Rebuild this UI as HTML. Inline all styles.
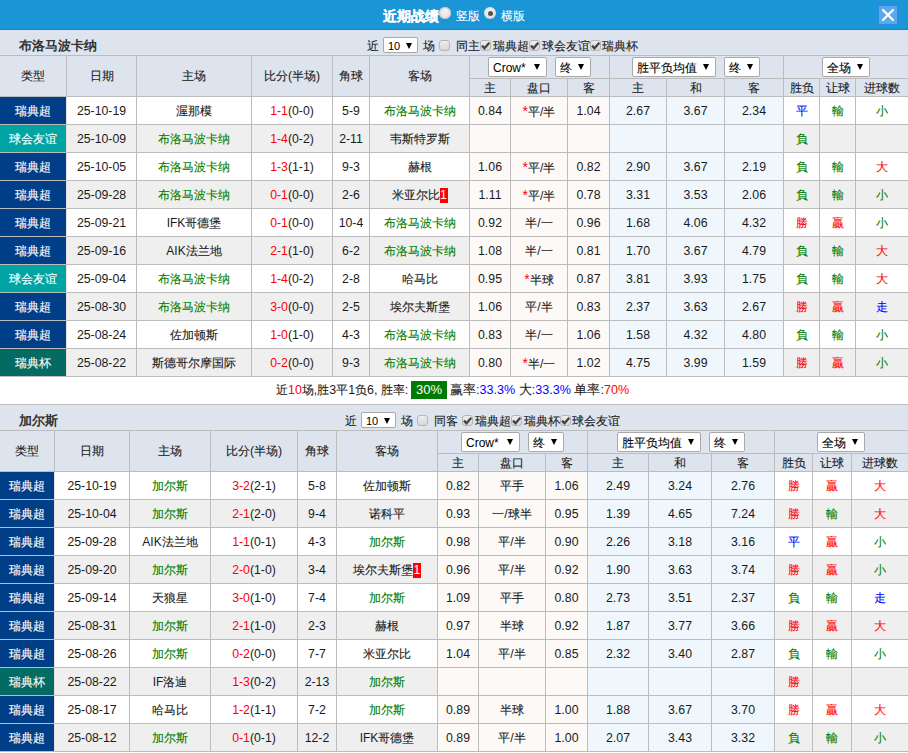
<!DOCTYPE html>
<html><head><meta charset="utf-8"><style>
html,body{margin:0;padding:0;}
body{width:908px;height:753px;overflow:hidden;position:relative;background:#fff;font-family:"Liberation Sans", sans-serif;}
.c{-webkit-text-stroke:0.1px currentColor;}
.b .c{-webkit-text-stroke:0;}
.cell .d{font-size:12.3px;}
.t .c{-webkit-text-stroke:0.25px #fff;}
</style></head><body>
<div style="position:absolute;left:0px;top:0px;width:908px;height:29px;background:#1a96d6;"></div><div style="position:absolute;left:0px;top:29px;width:908px;height:1px;background:#0b88cf;"></div><div class="t" style="position:absolute;left:383px;top:8px;height:17px;line-height:17px;color:#fff;font-size:14px;font-weight:bold;white-space:nowrap"><span class="c">近期战绩</span></div><div style="position:absolute;left:439px;top:7px;width:12px;height:12px;border-radius:50%;background:radial-gradient(circle at 50% 40%,#f4f4f4,#d8d8d8);box-shadow:inset 0 0 0 1px #c4c4c4"></div><div style="position:absolute;left:456px;top:9px;height:15px;line-height:15px;color:#fff;font-size:12px;font-weight:normal;white-space:nowrap;"><span class="c">竖版</span></div><div style="position:absolute;left:484px;top:7px;width:12px;height:12px;border-radius:50%;background:radial-gradient(circle at 50% 40%,#fafafa,#d0d0d0);"><div style="position:absolute;left:3.5px;top:3.5px;width:5px;height:5px;border-radius:50%;background:#555"></div></div><div style="position:absolute;left:501px;top:9px;height:15px;line-height:15px;color:#fff;font-size:12px;font-weight:normal;white-space:nowrap;"><span class="c">横版</span></div><div style="position:absolute;left:877px;top:4px;width:22px;height:22px;background:#2a8be4;"></div><div style="position:absolute;left:879px;top:6px;width:18px;height:18px;background:#5aa9ea;"></div><svg style="position:absolute;left:877px;top:4px" width="22" height="22"><path d="M6 6 L16 16 M16 6 L6 16" stroke="#fff" stroke-width="2.2" stroke-linecap="round"/></svg><div style="position:absolute;left:0px;top:30px;width:908px;height:25px;background:#dde4ed;"></div><div class="b" style="position:absolute;left:19px;top:36px;height:19px;line-height:19px;color:#333;font-size:13px;font-weight:bold;white-space:nowrap;"><span class="c">布洛马波卡纳</span></div><div style="position:absolute;left:367px;top:39px;height:15px;line-height:15px;color:#1a1a1a;font-size:12px;font-weight:normal;white-space:nowrap;"><span class="c">近</span></div><div style="position:absolute;left:383px;top:37px;width:33px;height:14px;border:1px solid #a9a9a9;border-radius:2px;background:#fff;box-sizing:content-box;font-size:11px;line-height:14px;color:#000;white-space:nowrap;"><span style="position:absolute;left:4px;top:1px"><span class="d">10</span></span><span style="position:absolute;right:5px;top:5px;width:0;height:0;border-left:3px solid transparent;border-right:3px solid transparent;border-top:6px solid #000"></span></div><div style="position:absolute;left:423px;top:39px;height:15px;line-height:15px;color:#1a1a1a;font-size:12px;font-weight:normal;white-space:nowrap;"><span class="c">场</span></div><div style="position:absolute;left:439px;top:40px;width:9px;height:9px;border:1px solid #b5b5b5;border-radius:3px;background:linear-gradient(#eeeeee,#d8d8d8);box-sizing:content-box"></div><div style="position:absolute;left:456px;top:39px;height:15px;line-height:15px;color:#1a1a1a;font-size:12px;font-weight:normal;white-space:nowrap;"><span class="c">同主</span></div><div style="position:absolute;left:480px;top:40px;width:9px;height:9px;border:1px solid #b5b5b5;border-radius:3px;background:linear-gradient(#eeeeee,#d8d8d8);box-sizing:content-box"><svg width="11" height="11" style="position:absolute;left:-1px;top:-1px"><path d="M2.0 5.6 L4.5 8.3 L9.3 2.8" stroke="#444" stroke-width="2.3" fill="none"/></svg></div><div style="position:absolute;left:493px;top:39px;height:15px;line-height:15px;color:#1a1a1a;font-size:12px;font-weight:normal;white-space:nowrap;"><span class="c">瑞典超</span></div><div style="position:absolute;left:529px;top:40px;width:9px;height:9px;border:1px solid #b5b5b5;border-radius:3px;background:linear-gradient(#eeeeee,#d8d8d8);box-sizing:content-box"><svg width="11" height="11" style="position:absolute;left:-1px;top:-1px"><path d="M2.0 5.6 L4.5 8.3 L9.3 2.8" stroke="#444" stroke-width="2.3" fill="none"/></svg></div><div style="position:absolute;left:542px;top:39px;height:15px;line-height:15px;color:#1a1a1a;font-size:12px;font-weight:normal;white-space:nowrap;"><span class="c">球会友谊</span></div><div style="position:absolute;left:590px;top:40px;width:9px;height:9px;border:1px solid #b5b5b5;border-radius:3px;background:linear-gradient(#eeeeee,#d8d8d8);box-sizing:content-box"><svg width="11" height="11" style="position:absolute;left:-1px;top:-1px"><path d="M2.0 5.6 L4.5 8.3 L9.3 2.8" stroke="#444" stroke-width="2.3" fill="none"/></svg></div><div style="position:absolute;left:602px;top:39px;height:15px;line-height:15px;color:#1a1a1a;font-size:12px;font-weight:normal;white-space:nowrap;"><span class="c">瑞典杯</span></div><div style="position:absolute;left:0px;top:56px;width:908px;height:40px;background:#dde4ed;"></div><div style="position:absolute;left:0px;top:55px;width:908px;height:1px;background:#bcbcbc;"></div><div style="position:absolute;left:0px;top:96px;width:908px;height:1px;background:#bcbcbc;"></div><div style="position:absolute;left:469px;top:78px;width:439px;height:1px;background:#bcbcbc;"></div><div style="position:absolute;left:66px;top:56px;width:1px;height:40px;background:#bcbcbc;"></div><div style="position:absolute;left:136px;top:56px;width:1px;height:40px;background:#bcbcbc;"></div><div style="position:absolute;left:251px;top:56px;width:1px;height:40px;background:#bcbcbc;"></div><div style="position:absolute;left:332px;top:56px;width:1px;height:40px;background:#bcbcbc;"></div><div style="position:absolute;left:369px;top:56px;width:1px;height:40px;background:#bcbcbc;"></div><div style="position:absolute;left:469px;top:56px;width:1px;height:40px;background:#bcbcbc;"></div><div style="position:absolute;left:609px;top:56px;width:1px;height:40px;background:#bcbcbc;"></div><div style="position:absolute;left:783px;top:56px;width:1px;height:40px;background:#bcbcbc;"></div><div style="position:absolute;left:510px;top:79px;width:1px;height:17px;background:#bcbcbc;"></div><div style="position:absolute;left:567px;top:79px;width:1px;height:17px;background:#bcbcbc;"></div><div style="position:absolute;left:666px;top:79px;width:1px;height:17px;background:#bcbcbc;"></div><div style="position:absolute;left:724px;top:79px;width:1px;height:17px;background:#bcbcbc;"></div><div style="position:absolute;left:819px;top:79px;width:1px;height:17px;background:#bcbcbc;"></div><div style="position:absolute;left:855px;top:79px;width:1px;height:17px;background:#bcbcbc;"></div><div class="cell" style="position:absolute;left:0px;top:56px;width:66px;height:40px;line-height:40px;text-align:center;color:#1a1a1a;font-size:12px;font-weight:normal;white-space:nowrap;"><span class="c">类型</span></div><div class="cell" style="position:absolute;left:67px;top:56px;width:69px;height:40px;line-height:40px;text-align:center;color:#1a1a1a;font-size:12px;font-weight:normal;white-space:nowrap;"><span class="c">日期</span></div><div class="cell" style="position:absolute;left:137px;top:56px;width:114px;height:40px;line-height:40px;text-align:center;color:#1a1a1a;font-size:12px;font-weight:normal;white-space:nowrap;"><span class="c">主场</span></div><div class="cell" style="position:absolute;left:252px;top:56px;width:80px;height:40px;line-height:40px;text-align:center;color:#1a1a1a;font-size:12px;font-weight:normal;white-space:nowrap;"><span class="c">比分</span><span class="d">(</span><span class="c">半场</span><span class="d">)</span></div><div class="cell" style="position:absolute;left:333px;top:56px;width:36px;height:40px;line-height:40px;text-align:center;color:#1a1a1a;font-size:12px;font-weight:normal;white-space:nowrap;"><span class="c">角球</span></div><div class="cell" style="position:absolute;left:370px;top:56px;width:99px;height:40px;line-height:40px;text-align:center;color:#1a1a1a;font-size:12px;font-weight:normal;white-space:nowrap;"><span class="c">客场</span></div><div class="cell" style="position:absolute;left:470px;top:80px;width:40px;height:17px;line-height:17px;text-align:center;color:#1a1a1a;font-size:12px;font-weight:normal;white-space:nowrap;"><span class="c">主</span></div><div class="cell" style="position:absolute;left:511px;top:80px;width:56px;height:17px;line-height:17px;text-align:center;color:#1a1a1a;font-size:12px;font-weight:normal;white-space:nowrap;"><span class="c">盘口</span></div><div class="cell" style="position:absolute;left:568px;top:80px;width:41px;height:17px;line-height:17px;text-align:center;color:#1a1a1a;font-size:12px;font-weight:normal;white-space:nowrap;"><span class="c">客</span></div><div class="cell" style="position:absolute;left:610px;top:80px;width:56px;height:17px;line-height:17px;text-align:center;color:#1a1a1a;font-size:12px;font-weight:normal;white-space:nowrap;"><span class="c">主</span></div><div class="cell" style="position:absolute;left:667px;top:80px;width:57px;height:17px;line-height:17px;text-align:center;color:#1a1a1a;font-size:12px;font-weight:normal;white-space:nowrap;"><span class="c">和</span></div><div class="cell" style="position:absolute;left:725px;top:80px;width:58px;height:17px;line-height:17px;text-align:center;color:#1a1a1a;font-size:12px;font-weight:normal;white-space:nowrap;"><span class="c">客</span></div><div class="cell" style="position:absolute;left:784px;top:80px;width:35px;height:17px;line-height:17px;text-align:center;color:#1a1a1a;font-size:12px;font-weight:normal;white-space:nowrap;"><span class="c">胜负</span></div><div class="cell" style="position:absolute;left:820px;top:80px;width:35px;height:17px;line-height:17px;text-align:center;color:#1a1a1a;font-size:12px;font-weight:normal;white-space:nowrap;"><span class="c">让球</span></div><div class="cell" style="position:absolute;left:856px;top:80px;width:52px;height:17px;line-height:17px;text-align:center;color:#1a1a1a;font-size:12px;font-weight:normal;white-space:nowrap;"><span class="c">进球数</span></div><div style="position:absolute;left:488px;top:57px;width:57px;height:18px;border:1px solid #a9a9a9;border-radius:2px;background:#fff;box-sizing:content-box;font-size:12px;line-height:18px;color:#000;white-space:nowrap;"><span style="position:absolute;left:4px;top:1px">Crow*</span><span style="position:absolute;right:6px;top:6px;width:0;height:0;border-left:3px solid transparent;border-right:3px solid transparent;border-top:6px solid #000"></span></div><div style="position:absolute;left:555px;top:57px;width:34px;height:18px;border:1px solid #a9a9a9;border-radius:2px;background:#fff;box-sizing:content-box;font-size:12px;line-height:18px;color:#000;white-space:nowrap;"><span style="position:absolute;left:4px;top:1px"><span class="c">终</span></span><span style="position:absolute;right:6px;top:6px;width:0;height:0;border-left:3px solid transparent;border-right:3px solid transparent;border-top:6px solid #000"></span></div><div style="position:absolute;left:632px;top:57px;width:82px;height:18px;border:1px solid #a9a9a9;border-radius:2px;background:#fff;box-sizing:content-box;font-size:12px;line-height:18px;color:#000;white-space:nowrap;"><span style="position:absolute;left:4px;top:1px"><span class="c">胜平负均值</span></span><span style="position:absolute;right:6px;top:6px;width:0;height:0;border-left:3px solid transparent;border-right:3px solid transparent;border-top:6px solid #000"></span></div><div style="position:absolute;left:724px;top:57px;width:34px;height:18px;border:1px solid #a9a9a9;border-radius:2px;background:#fff;box-sizing:content-box;font-size:12px;line-height:18px;color:#000;white-space:nowrap;"><span style="position:absolute;left:4px;top:1px"><span class="c">终</span></span><span style="position:absolute;right:6px;top:6px;width:0;height:0;border-left:3px solid transparent;border-right:3px solid transparent;border-top:6px solid #000"></span></div><div style="position:absolute;left:822px;top:57px;width:46px;height:18px;border:1px solid #a9a9a9;border-radius:2px;background:#fff;box-sizing:content-box;font-size:12px;line-height:18px;color:#000;white-space:nowrap;"><span style="position:absolute;left:4px;top:1px"><span class="c">全场</span></span><span style="position:absolute;right:6px;top:6px;width:0;height:0;border-left:3px solid transparent;border-right:3px solid transparent;border-top:6px solid #000"></span></div><div style="position:absolute;left:0px;top:97px;width:908px;height:27px;background:#ffffff;"></div><div style="position:absolute;left:0px;top:97px;width:66px;height:27px;background:#013e88;"></div><div style="position:absolute;left:470px;top:97px;width:139px;height:27px;background:#fdf9f7;"></div><div style="position:absolute;left:610px;top:97px;width:173px;height:27px;background:#eff7fc;"></div><div class="cell" style="position:absolute;left:0px;top:98px;width:66px;height:27px;line-height:27px;text-align:center;color:#fff;font-size:12px;font-weight:normal;white-space:nowrap;"><span class="c">瑞典超</span></div><div class="cell" style="position:absolute;left:67px;top:98px;width:69px;height:27px;line-height:27px;text-align:center;color:#1a1a1a;font-size:12px;font-weight:normal;white-space:nowrap;"><span class="d">25-10-19</span></div><div class="cell" style="position:absolute;left:137px;top:98px;width:114px;height:27px;line-height:27px;text-align:center;color:#1a1a1a;font-size:12px;font-weight:normal;white-space:nowrap;"><span class="c">渥那模</span></div><div class="cell" style="position:absolute;left:252px;top:98px;width:80px;height:27px;line-height:27px;text-align:center;color:#1a1a1a;font-size:12px;font-weight:normal;white-space:nowrap;"><span style="color:#ff0000"><span class="d">1-1</span></span><span class="d">(0-0)</span></div><div class="cell" style="position:absolute;left:333px;top:98px;width:36px;height:27px;line-height:27px;text-align:center;color:#1a1a1a;font-size:12px;font-weight:normal;white-space:nowrap;"><span class="d">5-9</span></div><div class="cell" style="position:absolute;left:370px;top:98px;width:99px;height:27px;line-height:27px;text-align:center;color:#008000;font-size:12px;font-weight:normal;white-space:nowrap;"><span class="c">布洛马波卡纳</span></div><div class="cell" style="position:absolute;left:470px;top:98px;width:40px;height:27px;line-height:27px;text-align:center;color:#1a1a1a;font-size:12px;font-weight:normal;white-space:nowrap;"><span class="d">0.84</span></div><div class="cell" style="position:absolute;left:511px;top:98px;width:56px;height:27px;line-height:27px;text-align:center;color:#1a1a1a;font-size:12px;font-weight:normal;white-space:nowrap;"><span style="color:#ff0000;font-size:14px">*</span><span class="c">平</span><span class="d">/</span><span class="c">半</span></div><div class="cell" style="position:absolute;left:568px;top:98px;width:41px;height:27px;line-height:27px;text-align:center;color:#1a1a1a;font-size:12px;font-weight:normal;white-space:nowrap;"><span class="d">1.04</span></div><div class="cell" style="position:absolute;left:610px;top:98px;width:56px;height:27px;line-height:27px;text-align:center;color:#1a1a1a;font-size:12px;font-weight:normal;white-space:nowrap;"><span class="d">2.67</span></div><div class="cell" style="position:absolute;left:667px;top:98px;width:57px;height:27px;line-height:27px;text-align:center;color:#1a1a1a;font-size:12px;font-weight:normal;white-space:nowrap;"><span class="d">3.67</span></div><div class="cell" style="position:absolute;left:725px;top:98px;width:58px;height:27px;line-height:27px;text-align:center;color:#1a1a1a;font-size:12px;font-weight:normal;white-space:nowrap;"><span class="d">2.34</span></div><div class="cell" style="position:absolute;left:784px;top:98px;width:35px;height:27px;line-height:27px;text-align:center;color:#0000ff;font-size:12px;font-weight:normal;white-space:nowrap;"><span class="c">平</span></div><div class="cell" style="position:absolute;left:820px;top:98px;width:35px;height:27px;line-height:27px;text-align:center;color:#008000;font-size:12px;font-weight:normal;white-space:nowrap;"><span class="c">輸</span></div><div class="cell" style="position:absolute;left:856px;top:98px;width:52px;height:27px;line-height:27px;text-align:center;color:#008000;font-size:12px;font-weight:normal;white-space:nowrap;"><span class="c">小</span></div><div style="position:absolute;left:0px;top:124px;width:908px;height:1px;background:#bcbcbc;"></div><div style="position:absolute;left:66px;top:97px;width:1px;height:27px;background:#e8e2e2;"></div><div style="position:absolute;left:136px;top:97px;width:1px;height:27px;background:#bcbcbc;"></div><div style="position:absolute;left:251px;top:97px;width:1px;height:27px;background:#bcbcbc;"></div><div style="position:absolute;left:332px;top:97px;width:1px;height:27px;background:#bcbcbc;"></div><div style="position:absolute;left:369px;top:97px;width:1px;height:27px;background:#bcbcbc;"></div><div style="position:absolute;left:469px;top:97px;width:1px;height:27px;background:#bcbcbc;"></div><div style="position:absolute;left:510px;top:97px;width:1px;height:27px;background:#bcbcbc;"></div><div style="position:absolute;left:567px;top:97px;width:1px;height:27px;background:#bcbcbc;"></div><div style="position:absolute;left:609px;top:97px;width:1px;height:27px;background:#bcbcbc;"></div><div style="position:absolute;left:666px;top:97px;width:1px;height:27px;background:#bcbcbc;"></div><div style="position:absolute;left:724px;top:97px;width:1px;height:27px;background:#bcbcbc;"></div><div style="position:absolute;left:783px;top:97px;width:1px;height:27px;background:#bcbcbc;"></div><div style="position:absolute;left:819px;top:97px;width:1px;height:27px;background:#bcbcbc;"></div><div style="position:absolute;left:855px;top:97px;width:1px;height:27px;background:#bcbcbc;"></div><div style="position:absolute;left:0px;top:125px;width:908px;height:27px;background:#efefef;"></div><div style="position:absolute;left:0px;top:125px;width:66px;height:27px;background:#00a5a3;"></div><div style="position:absolute;left:470px;top:125px;width:139px;height:27px;background:#fdf9f7;"></div><div style="position:absolute;left:610px;top:125px;width:173px;height:27px;background:#eff7fc;"></div><div class="cell" style="position:absolute;left:0px;top:126px;width:66px;height:27px;line-height:27px;text-align:center;color:#fff;font-size:12px;font-weight:normal;white-space:nowrap;"><span class="c">球会友谊</span></div><div class="cell" style="position:absolute;left:67px;top:126px;width:69px;height:27px;line-height:27px;text-align:center;color:#1a1a1a;font-size:12px;font-weight:normal;white-space:nowrap;"><span class="d">25-10-09</span></div><div class="cell" style="position:absolute;left:137px;top:126px;width:114px;height:27px;line-height:27px;text-align:center;color:#008000;font-size:12px;font-weight:normal;white-space:nowrap;"><span class="c">布洛马波卡纳</span></div><div class="cell" style="position:absolute;left:252px;top:126px;width:80px;height:27px;line-height:27px;text-align:center;color:#1a1a1a;font-size:12px;font-weight:normal;white-space:nowrap;"><span style="color:#ff0000"><span class="d">1-4</span></span><span class="d">(0-2)</span></div><div class="cell" style="position:absolute;left:333px;top:126px;width:36px;height:27px;line-height:27px;text-align:center;color:#1a1a1a;font-size:12px;font-weight:normal;white-space:nowrap;"><span class="d">2-11</span></div><div class="cell" style="position:absolute;left:370px;top:126px;width:99px;height:27px;line-height:27px;text-align:center;color:#1a1a1a;font-size:12px;font-weight:normal;white-space:nowrap;"><span class="c">韦斯特罗斯</span></div><div class="cell" style="position:absolute;left:784px;top:126px;width:35px;height:27px;line-height:27px;text-align:center;color:#008000;font-size:12px;font-weight:normal;white-space:nowrap;"><span class="c">負</span></div><div style="position:absolute;left:0px;top:152px;width:908px;height:1px;background:#bcbcbc;"></div><div style="position:absolute;left:66px;top:125px;width:1px;height:27px;background:#e8e2e2;"></div><div style="position:absolute;left:136px;top:125px;width:1px;height:27px;background:#bcbcbc;"></div><div style="position:absolute;left:251px;top:125px;width:1px;height:27px;background:#bcbcbc;"></div><div style="position:absolute;left:332px;top:125px;width:1px;height:27px;background:#bcbcbc;"></div><div style="position:absolute;left:369px;top:125px;width:1px;height:27px;background:#bcbcbc;"></div><div style="position:absolute;left:469px;top:125px;width:1px;height:27px;background:#bcbcbc;"></div><div style="position:absolute;left:510px;top:125px;width:1px;height:27px;background:#bcbcbc;"></div><div style="position:absolute;left:567px;top:125px;width:1px;height:27px;background:#bcbcbc;"></div><div style="position:absolute;left:609px;top:125px;width:1px;height:27px;background:#bcbcbc;"></div><div style="position:absolute;left:666px;top:125px;width:1px;height:27px;background:#bcbcbc;"></div><div style="position:absolute;left:724px;top:125px;width:1px;height:27px;background:#bcbcbc;"></div><div style="position:absolute;left:783px;top:125px;width:1px;height:27px;background:#bcbcbc;"></div><div style="position:absolute;left:819px;top:125px;width:1px;height:27px;background:#bcbcbc;"></div><div style="position:absolute;left:855px;top:125px;width:1px;height:27px;background:#bcbcbc;"></div><div style="position:absolute;left:0px;top:153px;width:908px;height:27px;background:#ffffff;"></div><div style="position:absolute;left:0px;top:153px;width:66px;height:27px;background:#013e88;"></div><div style="position:absolute;left:470px;top:153px;width:139px;height:27px;background:#fdf9f7;"></div><div style="position:absolute;left:610px;top:153px;width:173px;height:27px;background:#eff7fc;"></div><div class="cell" style="position:absolute;left:0px;top:154px;width:66px;height:27px;line-height:27px;text-align:center;color:#fff;font-size:12px;font-weight:normal;white-space:nowrap;"><span class="c">瑞典超</span></div><div class="cell" style="position:absolute;left:67px;top:154px;width:69px;height:27px;line-height:27px;text-align:center;color:#1a1a1a;font-size:12px;font-weight:normal;white-space:nowrap;"><span class="d">25-10-05</span></div><div class="cell" style="position:absolute;left:137px;top:154px;width:114px;height:27px;line-height:27px;text-align:center;color:#008000;font-size:12px;font-weight:normal;white-space:nowrap;"><span class="c">布洛马波卡纳</span></div><div class="cell" style="position:absolute;left:252px;top:154px;width:80px;height:27px;line-height:27px;text-align:center;color:#1a1a1a;font-size:12px;font-weight:normal;white-space:nowrap;"><span style="color:#ff0000"><span class="d">1-3</span></span><span class="d">(1-1)</span></div><div class="cell" style="position:absolute;left:333px;top:154px;width:36px;height:27px;line-height:27px;text-align:center;color:#1a1a1a;font-size:12px;font-weight:normal;white-space:nowrap;"><span class="d">9-3</span></div><div class="cell" style="position:absolute;left:370px;top:154px;width:99px;height:27px;line-height:27px;text-align:center;color:#1a1a1a;font-size:12px;font-weight:normal;white-space:nowrap;"><span class="c">赫根</span></div><div class="cell" style="position:absolute;left:470px;top:154px;width:40px;height:27px;line-height:27px;text-align:center;color:#1a1a1a;font-size:12px;font-weight:normal;white-space:nowrap;"><span class="d">1.06</span></div><div class="cell" style="position:absolute;left:511px;top:154px;width:56px;height:27px;line-height:27px;text-align:center;color:#1a1a1a;font-size:12px;font-weight:normal;white-space:nowrap;"><span style="color:#ff0000;font-size:14px">*</span><span class="c">平</span><span class="d">/</span><span class="c">半</span></div><div class="cell" style="position:absolute;left:568px;top:154px;width:41px;height:27px;line-height:27px;text-align:center;color:#1a1a1a;font-size:12px;font-weight:normal;white-space:nowrap;"><span class="d">0.82</span></div><div class="cell" style="position:absolute;left:610px;top:154px;width:56px;height:27px;line-height:27px;text-align:center;color:#1a1a1a;font-size:12px;font-weight:normal;white-space:nowrap;"><span class="d">2.90</span></div><div class="cell" style="position:absolute;left:667px;top:154px;width:57px;height:27px;line-height:27px;text-align:center;color:#1a1a1a;font-size:12px;font-weight:normal;white-space:nowrap;"><span class="d">3.67</span></div><div class="cell" style="position:absolute;left:725px;top:154px;width:58px;height:27px;line-height:27px;text-align:center;color:#1a1a1a;font-size:12px;font-weight:normal;white-space:nowrap;"><span class="d">2.19</span></div><div class="cell" style="position:absolute;left:784px;top:154px;width:35px;height:27px;line-height:27px;text-align:center;color:#008000;font-size:12px;font-weight:normal;white-space:nowrap;"><span class="c">負</span></div><div class="cell" style="position:absolute;left:820px;top:154px;width:35px;height:27px;line-height:27px;text-align:center;color:#008000;font-size:12px;font-weight:normal;white-space:nowrap;"><span class="c">輸</span></div><div class="cell" style="position:absolute;left:856px;top:154px;width:52px;height:27px;line-height:27px;text-align:center;color:#ff0000;font-size:12px;font-weight:normal;white-space:nowrap;"><span class="c">大</span></div><div style="position:absolute;left:0px;top:180px;width:908px;height:1px;background:#bcbcbc;"></div><div style="position:absolute;left:66px;top:153px;width:1px;height:27px;background:#e8e2e2;"></div><div style="position:absolute;left:136px;top:153px;width:1px;height:27px;background:#bcbcbc;"></div><div style="position:absolute;left:251px;top:153px;width:1px;height:27px;background:#bcbcbc;"></div><div style="position:absolute;left:332px;top:153px;width:1px;height:27px;background:#bcbcbc;"></div><div style="position:absolute;left:369px;top:153px;width:1px;height:27px;background:#bcbcbc;"></div><div style="position:absolute;left:469px;top:153px;width:1px;height:27px;background:#bcbcbc;"></div><div style="position:absolute;left:510px;top:153px;width:1px;height:27px;background:#bcbcbc;"></div><div style="position:absolute;left:567px;top:153px;width:1px;height:27px;background:#bcbcbc;"></div><div style="position:absolute;left:609px;top:153px;width:1px;height:27px;background:#bcbcbc;"></div><div style="position:absolute;left:666px;top:153px;width:1px;height:27px;background:#bcbcbc;"></div><div style="position:absolute;left:724px;top:153px;width:1px;height:27px;background:#bcbcbc;"></div><div style="position:absolute;left:783px;top:153px;width:1px;height:27px;background:#bcbcbc;"></div><div style="position:absolute;left:819px;top:153px;width:1px;height:27px;background:#bcbcbc;"></div><div style="position:absolute;left:855px;top:153px;width:1px;height:27px;background:#bcbcbc;"></div><div style="position:absolute;left:0px;top:181px;width:908px;height:27px;background:#efefef;"></div><div style="position:absolute;left:0px;top:181px;width:66px;height:27px;background:#013e88;"></div><div style="position:absolute;left:470px;top:181px;width:139px;height:27px;background:#fdf9f7;"></div><div style="position:absolute;left:610px;top:181px;width:173px;height:27px;background:#eff7fc;"></div><div class="cell" style="position:absolute;left:0px;top:182px;width:66px;height:27px;line-height:27px;text-align:center;color:#fff;font-size:12px;font-weight:normal;white-space:nowrap;"><span class="c">瑞典超</span></div><div class="cell" style="position:absolute;left:67px;top:182px;width:69px;height:27px;line-height:27px;text-align:center;color:#1a1a1a;font-size:12px;font-weight:normal;white-space:nowrap;"><span class="d">25-09-28</span></div><div class="cell" style="position:absolute;left:137px;top:182px;width:114px;height:27px;line-height:27px;text-align:center;color:#008000;font-size:12px;font-weight:normal;white-space:nowrap;"><span class="c">布洛马波卡纳</span></div><div class="cell" style="position:absolute;left:252px;top:182px;width:80px;height:27px;line-height:27px;text-align:center;color:#1a1a1a;font-size:12px;font-weight:normal;white-space:nowrap;"><span style="color:#ff0000"><span class="d">0-1</span></span><span class="d">(0-0)</span></div><div class="cell" style="position:absolute;left:333px;top:182px;width:36px;height:27px;line-height:27px;text-align:center;color:#1a1a1a;font-size:12px;font-weight:normal;white-space:nowrap;"><span class="d">2-6</span></div><div class="cell" style="position:absolute;left:370px;top:182px;width:99px;height:27px;line-height:27px;text-align:center;color:#1a1a1a;font-size:12px;font-weight:normal;white-space:nowrap;"><span class="c">米亚尔比</span><span style="display:inline-block;background:#f00;color:#fff;font-size:12px;line-height:15px;width:8px;text-align:center;vertical-align:0px"><span class="d">1</span></span></div><div class="cell" style="position:absolute;left:470px;top:182px;width:40px;height:27px;line-height:27px;text-align:center;color:#1a1a1a;font-size:12px;font-weight:normal;white-space:nowrap;"><span class="d">1.11</span></div><div class="cell" style="position:absolute;left:511px;top:182px;width:56px;height:27px;line-height:27px;text-align:center;color:#1a1a1a;font-size:12px;font-weight:normal;white-space:nowrap;"><span style="color:#ff0000;font-size:14px">*</span><span class="c">平</span><span class="d">/</span><span class="c">半</span></div><div class="cell" style="position:absolute;left:568px;top:182px;width:41px;height:27px;line-height:27px;text-align:center;color:#1a1a1a;font-size:12px;font-weight:normal;white-space:nowrap;"><span class="d">0.78</span></div><div class="cell" style="position:absolute;left:610px;top:182px;width:56px;height:27px;line-height:27px;text-align:center;color:#1a1a1a;font-size:12px;font-weight:normal;white-space:nowrap;"><span class="d">3.31</span></div><div class="cell" style="position:absolute;left:667px;top:182px;width:57px;height:27px;line-height:27px;text-align:center;color:#1a1a1a;font-size:12px;font-weight:normal;white-space:nowrap;"><span class="d">3.53</span></div><div class="cell" style="position:absolute;left:725px;top:182px;width:58px;height:27px;line-height:27px;text-align:center;color:#1a1a1a;font-size:12px;font-weight:normal;white-space:nowrap;"><span class="d">2.06</span></div><div class="cell" style="position:absolute;left:784px;top:182px;width:35px;height:27px;line-height:27px;text-align:center;color:#008000;font-size:12px;font-weight:normal;white-space:nowrap;"><span class="c">負</span></div><div class="cell" style="position:absolute;left:820px;top:182px;width:35px;height:27px;line-height:27px;text-align:center;color:#008000;font-size:12px;font-weight:normal;white-space:nowrap;"><span class="c">輸</span></div><div class="cell" style="position:absolute;left:856px;top:182px;width:52px;height:27px;line-height:27px;text-align:center;color:#008000;font-size:12px;font-weight:normal;white-space:nowrap;"><span class="c">小</span></div><div style="position:absolute;left:0px;top:208px;width:908px;height:1px;background:#bcbcbc;"></div><div style="position:absolute;left:66px;top:181px;width:1px;height:27px;background:#e8e2e2;"></div><div style="position:absolute;left:136px;top:181px;width:1px;height:27px;background:#bcbcbc;"></div><div style="position:absolute;left:251px;top:181px;width:1px;height:27px;background:#bcbcbc;"></div><div style="position:absolute;left:332px;top:181px;width:1px;height:27px;background:#bcbcbc;"></div><div style="position:absolute;left:369px;top:181px;width:1px;height:27px;background:#bcbcbc;"></div><div style="position:absolute;left:469px;top:181px;width:1px;height:27px;background:#bcbcbc;"></div><div style="position:absolute;left:510px;top:181px;width:1px;height:27px;background:#bcbcbc;"></div><div style="position:absolute;left:567px;top:181px;width:1px;height:27px;background:#bcbcbc;"></div><div style="position:absolute;left:609px;top:181px;width:1px;height:27px;background:#bcbcbc;"></div><div style="position:absolute;left:666px;top:181px;width:1px;height:27px;background:#bcbcbc;"></div><div style="position:absolute;left:724px;top:181px;width:1px;height:27px;background:#bcbcbc;"></div><div style="position:absolute;left:783px;top:181px;width:1px;height:27px;background:#bcbcbc;"></div><div style="position:absolute;left:819px;top:181px;width:1px;height:27px;background:#bcbcbc;"></div><div style="position:absolute;left:855px;top:181px;width:1px;height:27px;background:#bcbcbc;"></div><div style="position:absolute;left:0px;top:209px;width:908px;height:27px;background:#ffffff;"></div><div style="position:absolute;left:0px;top:209px;width:66px;height:27px;background:#013e88;"></div><div style="position:absolute;left:470px;top:209px;width:139px;height:27px;background:#fdf9f7;"></div><div style="position:absolute;left:610px;top:209px;width:173px;height:27px;background:#eff7fc;"></div><div class="cell" style="position:absolute;left:0px;top:210px;width:66px;height:27px;line-height:27px;text-align:center;color:#fff;font-size:12px;font-weight:normal;white-space:nowrap;"><span class="c">瑞典超</span></div><div class="cell" style="position:absolute;left:67px;top:210px;width:69px;height:27px;line-height:27px;text-align:center;color:#1a1a1a;font-size:12px;font-weight:normal;white-space:nowrap;"><span class="d">25-09-21</span></div><div class="cell" style="position:absolute;left:137px;top:210px;width:114px;height:27px;line-height:27px;text-align:center;color:#1a1a1a;font-size:12px;font-weight:normal;white-space:nowrap;">IFK<span class="c">哥德堡</span></div><div class="cell" style="position:absolute;left:252px;top:210px;width:80px;height:27px;line-height:27px;text-align:center;color:#1a1a1a;font-size:12px;font-weight:normal;white-space:nowrap;"><span style="color:#ff0000"><span class="d">0-1</span></span><span class="d">(0-0)</span></div><div class="cell" style="position:absolute;left:333px;top:210px;width:36px;height:27px;line-height:27px;text-align:center;color:#1a1a1a;font-size:12px;font-weight:normal;white-space:nowrap;"><span class="d">10-4</span></div><div class="cell" style="position:absolute;left:370px;top:210px;width:99px;height:27px;line-height:27px;text-align:center;color:#008000;font-size:12px;font-weight:normal;white-space:nowrap;"><span class="c">布洛马波卡纳</span></div><div class="cell" style="position:absolute;left:470px;top:210px;width:40px;height:27px;line-height:27px;text-align:center;color:#1a1a1a;font-size:12px;font-weight:normal;white-space:nowrap;"><span class="d">0.92</span></div><div class="cell" style="position:absolute;left:511px;top:210px;width:56px;height:27px;line-height:27px;text-align:center;color:#1a1a1a;font-size:12px;font-weight:normal;white-space:nowrap;"><span class="c">半</span><span class="d">/</span><span class="c">一</span></div><div class="cell" style="position:absolute;left:568px;top:210px;width:41px;height:27px;line-height:27px;text-align:center;color:#1a1a1a;font-size:12px;font-weight:normal;white-space:nowrap;"><span class="d">0.96</span></div><div class="cell" style="position:absolute;left:610px;top:210px;width:56px;height:27px;line-height:27px;text-align:center;color:#1a1a1a;font-size:12px;font-weight:normal;white-space:nowrap;"><span class="d">1.68</span></div><div class="cell" style="position:absolute;left:667px;top:210px;width:57px;height:27px;line-height:27px;text-align:center;color:#1a1a1a;font-size:12px;font-weight:normal;white-space:nowrap;"><span class="d">4.06</span></div><div class="cell" style="position:absolute;left:725px;top:210px;width:58px;height:27px;line-height:27px;text-align:center;color:#1a1a1a;font-size:12px;font-weight:normal;white-space:nowrap;"><span class="d">4.32</span></div><div class="cell" style="position:absolute;left:784px;top:210px;width:35px;height:27px;line-height:27px;text-align:center;color:#ff0000;font-size:12px;font-weight:normal;white-space:nowrap;"><span class="c">勝</span></div><div class="cell" style="position:absolute;left:820px;top:210px;width:35px;height:27px;line-height:27px;text-align:center;color:#ff0000;font-size:12px;font-weight:normal;white-space:nowrap;"><span class="c">贏</span></div><div class="cell" style="position:absolute;left:856px;top:210px;width:52px;height:27px;line-height:27px;text-align:center;color:#008000;font-size:12px;font-weight:normal;white-space:nowrap;"><span class="c">小</span></div><div style="position:absolute;left:0px;top:236px;width:908px;height:1px;background:#bcbcbc;"></div><div style="position:absolute;left:66px;top:209px;width:1px;height:27px;background:#e8e2e2;"></div><div style="position:absolute;left:136px;top:209px;width:1px;height:27px;background:#bcbcbc;"></div><div style="position:absolute;left:251px;top:209px;width:1px;height:27px;background:#bcbcbc;"></div><div style="position:absolute;left:332px;top:209px;width:1px;height:27px;background:#bcbcbc;"></div><div style="position:absolute;left:369px;top:209px;width:1px;height:27px;background:#bcbcbc;"></div><div style="position:absolute;left:469px;top:209px;width:1px;height:27px;background:#bcbcbc;"></div><div style="position:absolute;left:510px;top:209px;width:1px;height:27px;background:#bcbcbc;"></div><div style="position:absolute;left:567px;top:209px;width:1px;height:27px;background:#bcbcbc;"></div><div style="position:absolute;left:609px;top:209px;width:1px;height:27px;background:#bcbcbc;"></div><div style="position:absolute;left:666px;top:209px;width:1px;height:27px;background:#bcbcbc;"></div><div style="position:absolute;left:724px;top:209px;width:1px;height:27px;background:#bcbcbc;"></div><div style="position:absolute;left:783px;top:209px;width:1px;height:27px;background:#bcbcbc;"></div><div style="position:absolute;left:819px;top:209px;width:1px;height:27px;background:#bcbcbc;"></div><div style="position:absolute;left:855px;top:209px;width:1px;height:27px;background:#bcbcbc;"></div><div style="position:absolute;left:0px;top:237px;width:908px;height:27px;background:#efefef;"></div><div style="position:absolute;left:0px;top:237px;width:66px;height:27px;background:#013e88;"></div><div style="position:absolute;left:470px;top:237px;width:139px;height:27px;background:#fdf9f7;"></div><div style="position:absolute;left:610px;top:237px;width:173px;height:27px;background:#eff7fc;"></div><div class="cell" style="position:absolute;left:0px;top:238px;width:66px;height:27px;line-height:27px;text-align:center;color:#fff;font-size:12px;font-weight:normal;white-space:nowrap;"><span class="c">瑞典超</span></div><div class="cell" style="position:absolute;left:67px;top:238px;width:69px;height:27px;line-height:27px;text-align:center;color:#1a1a1a;font-size:12px;font-weight:normal;white-space:nowrap;"><span class="d">25-09-16</span></div><div class="cell" style="position:absolute;left:137px;top:238px;width:114px;height:27px;line-height:27px;text-align:center;color:#1a1a1a;font-size:12px;font-weight:normal;white-space:nowrap;">AIK<span class="c">法兰地</span></div><div class="cell" style="position:absolute;left:252px;top:238px;width:80px;height:27px;line-height:27px;text-align:center;color:#1a1a1a;font-size:12px;font-weight:normal;white-space:nowrap;"><span style="color:#ff0000"><span class="d">2-1</span></span><span class="d">(1-0)</span></div><div class="cell" style="position:absolute;left:333px;top:238px;width:36px;height:27px;line-height:27px;text-align:center;color:#1a1a1a;font-size:12px;font-weight:normal;white-space:nowrap;"><span class="d">6-2</span></div><div class="cell" style="position:absolute;left:370px;top:238px;width:99px;height:27px;line-height:27px;text-align:center;color:#008000;font-size:12px;font-weight:normal;white-space:nowrap;"><span class="c">布洛马波卡纳</span></div><div class="cell" style="position:absolute;left:470px;top:238px;width:40px;height:27px;line-height:27px;text-align:center;color:#1a1a1a;font-size:12px;font-weight:normal;white-space:nowrap;"><span class="d">1.08</span></div><div class="cell" style="position:absolute;left:511px;top:238px;width:56px;height:27px;line-height:27px;text-align:center;color:#1a1a1a;font-size:12px;font-weight:normal;white-space:nowrap;"><span class="c">半</span><span class="d">/</span><span class="c">一</span></div><div class="cell" style="position:absolute;left:568px;top:238px;width:41px;height:27px;line-height:27px;text-align:center;color:#1a1a1a;font-size:12px;font-weight:normal;white-space:nowrap;"><span class="d">0.81</span></div><div class="cell" style="position:absolute;left:610px;top:238px;width:56px;height:27px;line-height:27px;text-align:center;color:#1a1a1a;font-size:12px;font-weight:normal;white-space:nowrap;"><span class="d">1.70</span></div><div class="cell" style="position:absolute;left:667px;top:238px;width:57px;height:27px;line-height:27px;text-align:center;color:#1a1a1a;font-size:12px;font-weight:normal;white-space:nowrap;"><span class="d">3.67</span></div><div class="cell" style="position:absolute;left:725px;top:238px;width:58px;height:27px;line-height:27px;text-align:center;color:#1a1a1a;font-size:12px;font-weight:normal;white-space:nowrap;"><span class="d">4.79</span></div><div class="cell" style="position:absolute;left:784px;top:238px;width:35px;height:27px;line-height:27px;text-align:center;color:#008000;font-size:12px;font-weight:normal;white-space:nowrap;"><span class="c">負</span></div><div class="cell" style="position:absolute;left:820px;top:238px;width:35px;height:27px;line-height:27px;text-align:center;color:#008000;font-size:12px;font-weight:normal;white-space:nowrap;"><span class="c">輸</span></div><div class="cell" style="position:absolute;left:856px;top:238px;width:52px;height:27px;line-height:27px;text-align:center;color:#ff0000;font-size:12px;font-weight:normal;white-space:nowrap;"><span class="c">大</span></div><div style="position:absolute;left:0px;top:264px;width:908px;height:1px;background:#bcbcbc;"></div><div style="position:absolute;left:66px;top:237px;width:1px;height:27px;background:#e8e2e2;"></div><div style="position:absolute;left:136px;top:237px;width:1px;height:27px;background:#bcbcbc;"></div><div style="position:absolute;left:251px;top:237px;width:1px;height:27px;background:#bcbcbc;"></div><div style="position:absolute;left:332px;top:237px;width:1px;height:27px;background:#bcbcbc;"></div><div style="position:absolute;left:369px;top:237px;width:1px;height:27px;background:#bcbcbc;"></div><div style="position:absolute;left:469px;top:237px;width:1px;height:27px;background:#bcbcbc;"></div><div style="position:absolute;left:510px;top:237px;width:1px;height:27px;background:#bcbcbc;"></div><div style="position:absolute;left:567px;top:237px;width:1px;height:27px;background:#bcbcbc;"></div><div style="position:absolute;left:609px;top:237px;width:1px;height:27px;background:#bcbcbc;"></div><div style="position:absolute;left:666px;top:237px;width:1px;height:27px;background:#bcbcbc;"></div><div style="position:absolute;left:724px;top:237px;width:1px;height:27px;background:#bcbcbc;"></div><div style="position:absolute;left:783px;top:237px;width:1px;height:27px;background:#bcbcbc;"></div><div style="position:absolute;left:819px;top:237px;width:1px;height:27px;background:#bcbcbc;"></div><div style="position:absolute;left:855px;top:237px;width:1px;height:27px;background:#bcbcbc;"></div><div style="position:absolute;left:0px;top:265px;width:908px;height:27px;background:#ffffff;"></div><div style="position:absolute;left:0px;top:265px;width:66px;height:27px;background:#00a5a3;"></div><div style="position:absolute;left:470px;top:265px;width:139px;height:27px;background:#fdf9f7;"></div><div style="position:absolute;left:610px;top:265px;width:173px;height:27px;background:#eff7fc;"></div><div class="cell" style="position:absolute;left:0px;top:266px;width:66px;height:27px;line-height:27px;text-align:center;color:#fff;font-size:12px;font-weight:normal;white-space:nowrap;"><span class="c">球会友谊</span></div><div class="cell" style="position:absolute;left:67px;top:266px;width:69px;height:27px;line-height:27px;text-align:center;color:#1a1a1a;font-size:12px;font-weight:normal;white-space:nowrap;"><span class="d">25-09-04</span></div><div class="cell" style="position:absolute;left:137px;top:266px;width:114px;height:27px;line-height:27px;text-align:center;color:#008000;font-size:12px;font-weight:normal;white-space:nowrap;"><span class="c">布洛马波卡纳</span></div><div class="cell" style="position:absolute;left:252px;top:266px;width:80px;height:27px;line-height:27px;text-align:center;color:#1a1a1a;font-size:12px;font-weight:normal;white-space:nowrap;"><span style="color:#ff0000"><span class="d">1-4</span></span><span class="d">(0-2)</span></div><div class="cell" style="position:absolute;left:333px;top:266px;width:36px;height:27px;line-height:27px;text-align:center;color:#1a1a1a;font-size:12px;font-weight:normal;white-space:nowrap;"><span class="d">2-8</span></div><div class="cell" style="position:absolute;left:370px;top:266px;width:99px;height:27px;line-height:27px;text-align:center;color:#1a1a1a;font-size:12px;font-weight:normal;white-space:nowrap;"><span class="c">哈马比</span></div><div class="cell" style="position:absolute;left:470px;top:266px;width:40px;height:27px;line-height:27px;text-align:center;color:#1a1a1a;font-size:12px;font-weight:normal;white-space:nowrap;"><span class="d">0.95</span></div><div class="cell" style="position:absolute;left:511px;top:266px;width:56px;height:27px;line-height:27px;text-align:center;color:#1a1a1a;font-size:12px;font-weight:normal;white-space:nowrap;"><span style="color:#ff0000;font-size:14px">*</span><span class="c">半球</span></div><div class="cell" style="position:absolute;left:568px;top:266px;width:41px;height:27px;line-height:27px;text-align:center;color:#1a1a1a;font-size:12px;font-weight:normal;white-space:nowrap;"><span class="d">0.87</span></div><div class="cell" style="position:absolute;left:610px;top:266px;width:56px;height:27px;line-height:27px;text-align:center;color:#1a1a1a;font-size:12px;font-weight:normal;white-space:nowrap;"><span class="d">3.81</span></div><div class="cell" style="position:absolute;left:667px;top:266px;width:57px;height:27px;line-height:27px;text-align:center;color:#1a1a1a;font-size:12px;font-weight:normal;white-space:nowrap;"><span class="d">3.93</span></div><div class="cell" style="position:absolute;left:725px;top:266px;width:58px;height:27px;line-height:27px;text-align:center;color:#1a1a1a;font-size:12px;font-weight:normal;white-space:nowrap;"><span class="d">1.75</span></div><div class="cell" style="position:absolute;left:784px;top:266px;width:35px;height:27px;line-height:27px;text-align:center;color:#008000;font-size:12px;font-weight:normal;white-space:nowrap;"><span class="c">負</span></div><div class="cell" style="position:absolute;left:820px;top:266px;width:35px;height:27px;line-height:27px;text-align:center;color:#008000;font-size:12px;font-weight:normal;white-space:nowrap;"><span class="c">輸</span></div><div class="cell" style="position:absolute;left:856px;top:266px;width:52px;height:27px;line-height:27px;text-align:center;color:#ff0000;font-size:12px;font-weight:normal;white-space:nowrap;"><span class="c">大</span></div><div style="position:absolute;left:0px;top:292px;width:908px;height:1px;background:#bcbcbc;"></div><div style="position:absolute;left:66px;top:265px;width:1px;height:27px;background:#e8e2e2;"></div><div style="position:absolute;left:136px;top:265px;width:1px;height:27px;background:#bcbcbc;"></div><div style="position:absolute;left:251px;top:265px;width:1px;height:27px;background:#bcbcbc;"></div><div style="position:absolute;left:332px;top:265px;width:1px;height:27px;background:#bcbcbc;"></div><div style="position:absolute;left:369px;top:265px;width:1px;height:27px;background:#bcbcbc;"></div><div style="position:absolute;left:469px;top:265px;width:1px;height:27px;background:#bcbcbc;"></div><div style="position:absolute;left:510px;top:265px;width:1px;height:27px;background:#bcbcbc;"></div><div style="position:absolute;left:567px;top:265px;width:1px;height:27px;background:#bcbcbc;"></div><div style="position:absolute;left:609px;top:265px;width:1px;height:27px;background:#bcbcbc;"></div><div style="position:absolute;left:666px;top:265px;width:1px;height:27px;background:#bcbcbc;"></div><div style="position:absolute;left:724px;top:265px;width:1px;height:27px;background:#bcbcbc;"></div><div style="position:absolute;left:783px;top:265px;width:1px;height:27px;background:#bcbcbc;"></div><div style="position:absolute;left:819px;top:265px;width:1px;height:27px;background:#bcbcbc;"></div><div style="position:absolute;left:855px;top:265px;width:1px;height:27px;background:#bcbcbc;"></div><div style="position:absolute;left:0px;top:293px;width:908px;height:27px;background:#efefef;"></div><div style="position:absolute;left:0px;top:293px;width:66px;height:27px;background:#013e88;"></div><div style="position:absolute;left:470px;top:293px;width:139px;height:27px;background:#fdf9f7;"></div><div style="position:absolute;left:610px;top:293px;width:173px;height:27px;background:#eff7fc;"></div><div class="cell" style="position:absolute;left:0px;top:294px;width:66px;height:27px;line-height:27px;text-align:center;color:#fff;font-size:12px;font-weight:normal;white-space:nowrap;"><span class="c">瑞典超</span></div><div class="cell" style="position:absolute;left:67px;top:294px;width:69px;height:27px;line-height:27px;text-align:center;color:#1a1a1a;font-size:12px;font-weight:normal;white-space:nowrap;"><span class="d">25-08-30</span></div><div class="cell" style="position:absolute;left:137px;top:294px;width:114px;height:27px;line-height:27px;text-align:center;color:#008000;font-size:12px;font-weight:normal;white-space:nowrap;"><span class="c">布洛马波卡纳</span></div><div class="cell" style="position:absolute;left:252px;top:294px;width:80px;height:27px;line-height:27px;text-align:center;color:#1a1a1a;font-size:12px;font-weight:normal;white-space:nowrap;"><span style="color:#ff0000"><span class="d">3-0</span></span><span class="d">(0-0)</span></div><div class="cell" style="position:absolute;left:333px;top:294px;width:36px;height:27px;line-height:27px;text-align:center;color:#1a1a1a;font-size:12px;font-weight:normal;white-space:nowrap;"><span class="d">2-5</span></div><div class="cell" style="position:absolute;left:370px;top:294px;width:99px;height:27px;line-height:27px;text-align:center;color:#1a1a1a;font-size:12px;font-weight:normal;white-space:nowrap;"><span class="c">埃尔夫斯堡</span></div><div class="cell" style="position:absolute;left:470px;top:294px;width:40px;height:27px;line-height:27px;text-align:center;color:#1a1a1a;font-size:12px;font-weight:normal;white-space:nowrap;"><span class="d">1.06</span></div><div class="cell" style="position:absolute;left:511px;top:294px;width:56px;height:27px;line-height:27px;text-align:center;color:#1a1a1a;font-size:12px;font-weight:normal;white-space:nowrap;"><span class="c">平</span><span class="d">/</span><span class="c">半</span></div><div class="cell" style="position:absolute;left:568px;top:294px;width:41px;height:27px;line-height:27px;text-align:center;color:#1a1a1a;font-size:12px;font-weight:normal;white-space:nowrap;"><span class="d">0.83</span></div><div class="cell" style="position:absolute;left:610px;top:294px;width:56px;height:27px;line-height:27px;text-align:center;color:#1a1a1a;font-size:12px;font-weight:normal;white-space:nowrap;"><span class="d">2.37</span></div><div class="cell" style="position:absolute;left:667px;top:294px;width:57px;height:27px;line-height:27px;text-align:center;color:#1a1a1a;font-size:12px;font-weight:normal;white-space:nowrap;"><span class="d">3.63</span></div><div class="cell" style="position:absolute;left:725px;top:294px;width:58px;height:27px;line-height:27px;text-align:center;color:#1a1a1a;font-size:12px;font-weight:normal;white-space:nowrap;"><span class="d">2.67</span></div><div class="cell" style="position:absolute;left:784px;top:294px;width:35px;height:27px;line-height:27px;text-align:center;color:#ff0000;font-size:12px;font-weight:normal;white-space:nowrap;"><span class="c">勝</span></div><div class="cell" style="position:absolute;left:820px;top:294px;width:35px;height:27px;line-height:27px;text-align:center;color:#ff0000;font-size:12px;font-weight:normal;white-space:nowrap;"><span class="c">贏</span></div><div class="cell" style="position:absolute;left:856px;top:294px;width:52px;height:27px;line-height:27px;text-align:center;color:#0000ff;font-size:12px;font-weight:normal;white-space:nowrap;"><span class="c">走</span></div><div style="position:absolute;left:0px;top:320px;width:908px;height:1px;background:#bcbcbc;"></div><div style="position:absolute;left:66px;top:293px;width:1px;height:27px;background:#e8e2e2;"></div><div style="position:absolute;left:136px;top:293px;width:1px;height:27px;background:#bcbcbc;"></div><div style="position:absolute;left:251px;top:293px;width:1px;height:27px;background:#bcbcbc;"></div><div style="position:absolute;left:332px;top:293px;width:1px;height:27px;background:#bcbcbc;"></div><div style="position:absolute;left:369px;top:293px;width:1px;height:27px;background:#bcbcbc;"></div><div style="position:absolute;left:469px;top:293px;width:1px;height:27px;background:#bcbcbc;"></div><div style="position:absolute;left:510px;top:293px;width:1px;height:27px;background:#bcbcbc;"></div><div style="position:absolute;left:567px;top:293px;width:1px;height:27px;background:#bcbcbc;"></div><div style="position:absolute;left:609px;top:293px;width:1px;height:27px;background:#bcbcbc;"></div><div style="position:absolute;left:666px;top:293px;width:1px;height:27px;background:#bcbcbc;"></div><div style="position:absolute;left:724px;top:293px;width:1px;height:27px;background:#bcbcbc;"></div><div style="position:absolute;left:783px;top:293px;width:1px;height:27px;background:#bcbcbc;"></div><div style="position:absolute;left:819px;top:293px;width:1px;height:27px;background:#bcbcbc;"></div><div style="position:absolute;left:855px;top:293px;width:1px;height:27px;background:#bcbcbc;"></div><div style="position:absolute;left:0px;top:321px;width:908px;height:27px;background:#ffffff;"></div><div style="position:absolute;left:0px;top:321px;width:66px;height:27px;background:#013e88;"></div><div style="position:absolute;left:470px;top:321px;width:139px;height:27px;background:#fdf9f7;"></div><div style="position:absolute;left:610px;top:321px;width:173px;height:27px;background:#eff7fc;"></div><div class="cell" style="position:absolute;left:0px;top:322px;width:66px;height:27px;line-height:27px;text-align:center;color:#fff;font-size:12px;font-weight:normal;white-space:nowrap;"><span class="c">瑞典超</span></div><div class="cell" style="position:absolute;left:67px;top:322px;width:69px;height:27px;line-height:27px;text-align:center;color:#1a1a1a;font-size:12px;font-weight:normal;white-space:nowrap;"><span class="d">25-08-24</span></div><div class="cell" style="position:absolute;left:137px;top:322px;width:114px;height:27px;line-height:27px;text-align:center;color:#1a1a1a;font-size:12px;font-weight:normal;white-space:nowrap;"><span class="c">佐加顿斯</span></div><div class="cell" style="position:absolute;left:252px;top:322px;width:80px;height:27px;line-height:27px;text-align:center;color:#1a1a1a;font-size:12px;font-weight:normal;white-space:nowrap;"><span style="color:#ff0000"><span class="d">1-0</span></span><span class="d">(1-0)</span></div><div class="cell" style="position:absolute;left:333px;top:322px;width:36px;height:27px;line-height:27px;text-align:center;color:#1a1a1a;font-size:12px;font-weight:normal;white-space:nowrap;"><span class="d">4-3</span></div><div class="cell" style="position:absolute;left:370px;top:322px;width:99px;height:27px;line-height:27px;text-align:center;color:#008000;font-size:12px;font-weight:normal;white-space:nowrap;"><span class="c">布洛马波卡纳</span></div><div class="cell" style="position:absolute;left:470px;top:322px;width:40px;height:27px;line-height:27px;text-align:center;color:#1a1a1a;font-size:12px;font-weight:normal;white-space:nowrap;"><span class="d">0.83</span></div><div class="cell" style="position:absolute;left:511px;top:322px;width:56px;height:27px;line-height:27px;text-align:center;color:#1a1a1a;font-size:12px;font-weight:normal;white-space:nowrap;"><span class="c">半</span><span class="d">/</span><span class="c">一</span></div><div class="cell" style="position:absolute;left:568px;top:322px;width:41px;height:27px;line-height:27px;text-align:center;color:#1a1a1a;font-size:12px;font-weight:normal;white-space:nowrap;"><span class="d">1.06</span></div><div class="cell" style="position:absolute;left:610px;top:322px;width:56px;height:27px;line-height:27px;text-align:center;color:#1a1a1a;font-size:12px;font-weight:normal;white-space:nowrap;"><span class="d">1.58</span></div><div class="cell" style="position:absolute;left:667px;top:322px;width:57px;height:27px;line-height:27px;text-align:center;color:#1a1a1a;font-size:12px;font-weight:normal;white-space:nowrap;"><span class="d">4.32</span></div><div class="cell" style="position:absolute;left:725px;top:322px;width:58px;height:27px;line-height:27px;text-align:center;color:#1a1a1a;font-size:12px;font-weight:normal;white-space:nowrap;"><span class="d">4.80</span></div><div class="cell" style="position:absolute;left:784px;top:322px;width:35px;height:27px;line-height:27px;text-align:center;color:#008000;font-size:12px;font-weight:normal;white-space:nowrap;"><span class="c">負</span></div><div class="cell" style="position:absolute;left:820px;top:322px;width:35px;height:27px;line-height:27px;text-align:center;color:#008000;font-size:12px;font-weight:normal;white-space:nowrap;"><span class="c">輸</span></div><div class="cell" style="position:absolute;left:856px;top:322px;width:52px;height:27px;line-height:27px;text-align:center;color:#008000;font-size:12px;font-weight:normal;white-space:nowrap;"><span class="c">小</span></div><div style="position:absolute;left:0px;top:348px;width:908px;height:1px;background:#bcbcbc;"></div><div style="position:absolute;left:66px;top:321px;width:1px;height:27px;background:#e8e2e2;"></div><div style="position:absolute;left:136px;top:321px;width:1px;height:27px;background:#bcbcbc;"></div><div style="position:absolute;left:251px;top:321px;width:1px;height:27px;background:#bcbcbc;"></div><div style="position:absolute;left:332px;top:321px;width:1px;height:27px;background:#bcbcbc;"></div><div style="position:absolute;left:369px;top:321px;width:1px;height:27px;background:#bcbcbc;"></div><div style="position:absolute;left:469px;top:321px;width:1px;height:27px;background:#bcbcbc;"></div><div style="position:absolute;left:510px;top:321px;width:1px;height:27px;background:#bcbcbc;"></div><div style="position:absolute;left:567px;top:321px;width:1px;height:27px;background:#bcbcbc;"></div><div style="position:absolute;left:609px;top:321px;width:1px;height:27px;background:#bcbcbc;"></div><div style="position:absolute;left:666px;top:321px;width:1px;height:27px;background:#bcbcbc;"></div><div style="position:absolute;left:724px;top:321px;width:1px;height:27px;background:#bcbcbc;"></div><div style="position:absolute;left:783px;top:321px;width:1px;height:27px;background:#bcbcbc;"></div><div style="position:absolute;left:819px;top:321px;width:1px;height:27px;background:#bcbcbc;"></div><div style="position:absolute;left:855px;top:321px;width:1px;height:27px;background:#bcbcbc;"></div><div style="position:absolute;left:0px;top:349px;width:908px;height:27px;background:#efefef;"></div><div style="position:absolute;left:0px;top:349px;width:66px;height:27px;background:#036b62;"></div><div style="position:absolute;left:470px;top:349px;width:139px;height:27px;background:#fdf9f7;"></div><div style="position:absolute;left:610px;top:349px;width:173px;height:27px;background:#eff7fc;"></div><div class="cell" style="position:absolute;left:0px;top:350px;width:66px;height:27px;line-height:27px;text-align:center;color:#fff;font-size:12px;font-weight:normal;white-space:nowrap;"><span class="c">瑞典杯</span></div><div class="cell" style="position:absolute;left:67px;top:350px;width:69px;height:27px;line-height:27px;text-align:center;color:#1a1a1a;font-size:12px;font-weight:normal;white-space:nowrap;"><span class="d">25-08-22</span></div><div class="cell" style="position:absolute;left:137px;top:350px;width:114px;height:27px;line-height:27px;text-align:center;color:#1a1a1a;font-size:12px;font-weight:normal;white-space:nowrap;"><span class="c">斯德哥尔摩国际</span></div><div class="cell" style="position:absolute;left:252px;top:350px;width:80px;height:27px;line-height:27px;text-align:center;color:#1a1a1a;font-size:12px;font-weight:normal;white-space:nowrap;"><span style="color:#ff0000"><span class="d">0-2</span></span><span class="d">(0-0)</span></div><div class="cell" style="position:absolute;left:333px;top:350px;width:36px;height:27px;line-height:27px;text-align:center;color:#1a1a1a;font-size:12px;font-weight:normal;white-space:nowrap;"><span class="d">9-3</span></div><div class="cell" style="position:absolute;left:370px;top:350px;width:99px;height:27px;line-height:27px;text-align:center;color:#008000;font-size:12px;font-weight:normal;white-space:nowrap;"><span class="c">布洛马波卡纳</span></div><div class="cell" style="position:absolute;left:470px;top:350px;width:40px;height:27px;line-height:27px;text-align:center;color:#1a1a1a;font-size:12px;font-weight:normal;white-space:nowrap;"><span class="d">0.80</span></div><div class="cell" style="position:absolute;left:511px;top:350px;width:56px;height:27px;line-height:27px;text-align:center;color:#1a1a1a;font-size:12px;font-weight:normal;white-space:nowrap;"><span style="color:#ff0000;font-size:14px">*</span><span class="c">半</span><span class="d">/</span><span class="c">一</span></div><div class="cell" style="position:absolute;left:568px;top:350px;width:41px;height:27px;line-height:27px;text-align:center;color:#1a1a1a;font-size:12px;font-weight:normal;white-space:nowrap;"><span class="d">1.02</span></div><div class="cell" style="position:absolute;left:610px;top:350px;width:56px;height:27px;line-height:27px;text-align:center;color:#1a1a1a;font-size:12px;font-weight:normal;white-space:nowrap;"><span class="d">4.75</span></div><div class="cell" style="position:absolute;left:667px;top:350px;width:57px;height:27px;line-height:27px;text-align:center;color:#1a1a1a;font-size:12px;font-weight:normal;white-space:nowrap;"><span class="d">3.99</span></div><div class="cell" style="position:absolute;left:725px;top:350px;width:58px;height:27px;line-height:27px;text-align:center;color:#1a1a1a;font-size:12px;font-weight:normal;white-space:nowrap;"><span class="d">1.59</span></div><div class="cell" style="position:absolute;left:784px;top:350px;width:35px;height:27px;line-height:27px;text-align:center;color:#ff0000;font-size:12px;font-weight:normal;white-space:nowrap;"><span class="c">勝</span></div><div class="cell" style="position:absolute;left:820px;top:350px;width:35px;height:27px;line-height:27px;text-align:center;color:#ff0000;font-size:12px;font-weight:normal;white-space:nowrap;"><span class="c">贏</span></div><div class="cell" style="position:absolute;left:856px;top:350px;width:52px;height:27px;line-height:27px;text-align:center;color:#008000;font-size:12px;font-weight:normal;white-space:nowrap;"><span class="c">小</span></div><div style="position:absolute;left:0px;top:376px;width:908px;height:1px;background:#bcbcbc;"></div><div style="position:absolute;left:66px;top:349px;width:1px;height:27px;background:#e8e2e2;"></div><div style="position:absolute;left:136px;top:349px;width:1px;height:27px;background:#bcbcbc;"></div><div style="position:absolute;left:251px;top:349px;width:1px;height:27px;background:#bcbcbc;"></div><div style="position:absolute;left:332px;top:349px;width:1px;height:27px;background:#bcbcbc;"></div><div style="position:absolute;left:369px;top:349px;width:1px;height:27px;background:#bcbcbc;"></div><div style="position:absolute;left:469px;top:349px;width:1px;height:27px;background:#bcbcbc;"></div><div style="position:absolute;left:510px;top:349px;width:1px;height:27px;background:#bcbcbc;"></div><div style="position:absolute;left:567px;top:349px;width:1px;height:27px;background:#bcbcbc;"></div><div style="position:absolute;left:609px;top:349px;width:1px;height:27px;background:#bcbcbc;"></div><div style="position:absolute;left:666px;top:349px;width:1px;height:27px;background:#bcbcbc;"></div><div style="position:absolute;left:724px;top:349px;width:1px;height:27px;background:#bcbcbc;"></div><div style="position:absolute;left:783px;top:349px;width:1px;height:27px;background:#bcbcbc;"></div><div style="position:absolute;left:819px;top:349px;width:1px;height:27px;background:#bcbcbc;"></div><div style="position:absolute;left:855px;top:349px;width:1px;height:27px;background:#bcbcbc;"></div><div style="position:absolute;left:0px;top:377px;width:908px;height:27px;background:#fff;"></div><div style="position:absolute;left:276px;top:377px;height:27px;line-height:27px;font-size:12.4px;color:#1a1a1a;white-space:nowrap"><span class="c">近</span><span style="color:#ff0000"><span class="d">10</span></span><span class="c">场</span>,<span class="c">胜</span><span class="d">3</span><span class="c">平</span><span class="d">1</span><span class="c">负</span><span class="d">6</span>, <span class="c">胜率</span>:</div><div style="position:absolute;left:411px;top:381px;width:36px;height:18px;background:#007a00;"></div><div style="position:absolute;left:411px;top:381px;width:36px;height:18px;line-height:18px;text-align:center;color:#fff;font-size:13px;font-weight:normal;white-space:nowrap;"><span class="d">30%</span></div><div style="position:absolute;left:450px;top:377px;height:27px;line-height:27px;font-size:12.6px;color:#1a1a1a;white-space:nowrap"><span class="c">赢率</span>:<span style="color:#0000ff"><span class="d">33.3%</span></span> <span class="c">大</span>:<span style="color:#0000ff"><span class="d">33.3%</span></span> <span class="c">单率</span>:<span style="color:#ff0000"><span class="d">70%</span></span></div><div style="position:absolute;left:0px;top:404px;width:908px;height:1px;background:#bcbcbc;"></div><div style="position:absolute;left:0px;top:405px;width:908px;height:25px;background:#dde4ed;"></div><div class="b" style="position:absolute;left:19px;top:411px;height:19px;line-height:19px;color:#333;font-size:13px;font-weight:bold;white-space:nowrap;"><span class="c">加尔斯</span></div><div style="position:absolute;left:345px;top:414px;height:15px;line-height:15px;color:#1a1a1a;font-size:12px;font-weight:normal;white-space:nowrap;"><span class="c">近</span></div><div style="position:absolute;left:361px;top:412px;width:33px;height:14px;border:1px solid #a9a9a9;border-radius:2px;background:#fff;box-sizing:content-box;font-size:11px;line-height:14px;color:#000;white-space:nowrap;"><span style="position:absolute;left:4px;top:1px"><span class="d">10</span></span><span style="position:absolute;right:5px;top:5px;width:0;height:0;border-left:3px solid transparent;border-right:3px solid transparent;border-top:6px solid #000"></span></div><div style="position:absolute;left:401px;top:414px;height:15px;line-height:15px;color:#1a1a1a;font-size:12px;font-weight:normal;white-space:nowrap;"><span class="c">场</span></div><div style="position:absolute;left:417px;top:415px;width:9px;height:9px;border:1px solid #b5b5b5;border-radius:3px;background:linear-gradient(#eeeeee,#d8d8d8);box-sizing:content-box"></div><div style="position:absolute;left:434px;top:414px;height:15px;line-height:15px;color:#1a1a1a;font-size:12px;font-weight:normal;white-space:nowrap;"><span class="c">同客</span></div><div style="position:absolute;left:462px;top:415px;width:9px;height:9px;border:1px solid #b5b5b5;border-radius:3px;background:linear-gradient(#eeeeee,#d8d8d8);box-sizing:content-box"><svg width="11" height="11" style="position:absolute;left:-1px;top:-1px"><path d="M2.0 5.6 L4.5 8.3 L9.3 2.8" stroke="#444" stroke-width="2.3" fill="none"/></svg></div><div style="position:absolute;left:475px;top:414px;height:15px;line-height:15px;color:#1a1a1a;font-size:12px;font-weight:normal;white-space:nowrap;"><span class="c">瑞典超</span></div><div style="position:absolute;left:511px;top:415px;width:9px;height:9px;border:1px solid #b5b5b5;border-radius:3px;background:linear-gradient(#eeeeee,#d8d8d8);box-sizing:content-box"><svg width="11" height="11" style="position:absolute;left:-1px;top:-1px"><path d="M2.0 5.6 L4.5 8.3 L9.3 2.8" stroke="#444" stroke-width="2.3" fill="none"/></svg></div><div style="position:absolute;left:524px;top:414px;height:15px;line-height:15px;color:#1a1a1a;font-size:12px;font-weight:normal;white-space:nowrap;"><span class="c">瑞典杯</span></div><div style="position:absolute;left:560px;top:415px;width:9px;height:9px;border:1px solid #b5b5b5;border-radius:3px;background:linear-gradient(#eeeeee,#d8d8d8);box-sizing:content-box"><svg width="11" height="11" style="position:absolute;left:-1px;top:-1px"><path d="M2.0 5.6 L4.5 8.3 L9.3 2.8" stroke="#444" stroke-width="2.3" fill="none"/></svg></div><div style="position:absolute;left:572px;top:414px;height:15px;line-height:15px;color:#1a1a1a;font-size:12px;font-weight:normal;white-space:nowrap;"><span class="c">球会友谊</span></div><div style="position:absolute;left:0px;top:431px;width:908px;height:40px;background:#dde4ed;"></div><div style="position:absolute;left:0px;top:430px;width:908px;height:1px;background:#bcbcbc;"></div><div style="position:absolute;left:0px;top:471px;width:908px;height:1px;background:#bcbcbc;"></div><div style="position:absolute;left:437px;top:453px;width:471px;height:1px;background:#bcbcbc;"></div><div style="position:absolute;left:54px;top:431px;width:1px;height:40px;background:#bcbcbc;"></div><div style="position:absolute;left:129px;top:431px;width:1px;height:40px;background:#bcbcbc;"></div><div style="position:absolute;left:210px;top:431px;width:1px;height:40px;background:#bcbcbc;"></div><div style="position:absolute;left:297px;top:431px;width:1px;height:40px;background:#bcbcbc;"></div><div style="position:absolute;left:336px;top:431px;width:1px;height:40px;background:#bcbcbc;"></div><div style="position:absolute;left:437px;top:431px;width:1px;height:40px;background:#bcbcbc;"></div><div style="position:absolute;left:587px;top:431px;width:1px;height:40px;background:#bcbcbc;"></div><div style="position:absolute;left:774px;top:431px;width:1px;height:40px;background:#bcbcbc;"></div><div style="position:absolute;left:478px;top:454px;width:1px;height:17px;background:#bcbcbc;"></div><div style="position:absolute;left:545px;top:454px;width:1px;height:17px;background:#bcbcbc;"></div><div style="position:absolute;left:648px;top:454px;width:1px;height:17px;background:#bcbcbc;"></div><div style="position:absolute;left:711px;top:454px;width:1px;height:17px;background:#bcbcbc;"></div><div style="position:absolute;left:812px;top:454px;width:1px;height:17px;background:#bcbcbc;"></div><div style="position:absolute;left:851px;top:454px;width:1px;height:17px;background:#bcbcbc;"></div><div class="cell" style="position:absolute;left:0px;top:431px;width:54px;height:40px;line-height:40px;text-align:center;color:#1a1a1a;font-size:12px;font-weight:normal;white-space:nowrap;"><span class="c">类型</span></div><div class="cell" style="position:absolute;left:55px;top:431px;width:74px;height:40px;line-height:40px;text-align:center;color:#1a1a1a;font-size:12px;font-weight:normal;white-space:nowrap;"><span class="c">日期</span></div><div class="cell" style="position:absolute;left:130px;top:431px;width:80px;height:40px;line-height:40px;text-align:center;color:#1a1a1a;font-size:12px;font-weight:normal;white-space:nowrap;"><span class="c">主场</span></div><div class="cell" style="position:absolute;left:211px;top:431px;width:86px;height:40px;line-height:40px;text-align:center;color:#1a1a1a;font-size:12px;font-weight:normal;white-space:nowrap;"><span class="c">比分</span><span class="d">(</span><span class="c">半场</span><span class="d">)</span></div><div class="cell" style="position:absolute;left:298px;top:431px;width:38px;height:40px;line-height:40px;text-align:center;color:#1a1a1a;font-size:12px;font-weight:normal;white-space:nowrap;"><span class="c">角球</span></div><div class="cell" style="position:absolute;left:337px;top:431px;width:100px;height:40px;line-height:40px;text-align:center;color:#1a1a1a;font-size:12px;font-weight:normal;white-space:nowrap;"><span class="c">客场</span></div><div class="cell" style="position:absolute;left:438px;top:455px;width:40px;height:17px;line-height:17px;text-align:center;color:#1a1a1a;font-size:12px;font-weight:normal;white-space:nowrap;"><span class="c">主</span></div><div class="cell" style="position:absolute;left:479px;top:455px;width:66px;height:17px;line-height:17px;text-align:center;color:#1a1a1a;font-size:12px;font-weight:normal;white-space:nowrap;"><span class="c">盘口</span></div><div class="cell" style="position:absolute;left:546px;top:455px;width:41px;height:17px;line-height:17px;text-align:center;color:#1a1a1a;font-size:12px;font-weight:normal;white-space:nowrap;"><span class="c">客</span></div><div class="cell" style="position:absolute;left:588px;top:455px;width:60px;height:17px;line-height:17px;text-align:center;color:#1a1a1a;font-size:12px;font-weight:normal;white-space:nowrap;"><span class="c">主</span></div><div class="cell" style="position:absolute;left:649px;top:455px;width:62px;height:17px;line-height:17px;text-align:center;color:#1a1a1a;font-size:12px;font-weight:normal;white-space:nowrap;"><span class="c">和</span></div><div class="cell" style="position:absolute;left:712px;top:455px;width:62px;height:17px;line-height:17px;text-align:center;color:#1a1a1a;font-size:12px;font-weight:normal;white-space:nowrap;"><span class="c">客</span></div><div class="cell" style="position:absolute;left:775px;top:455px;width:37px;height:17px;line-height:17px;text-align:center;color:#1a1a1a;font-size:12px;font-weight:normal;white-space:nowrap;"><span class="c">胜负</span></div><div class="cell" style="position:absolute;left:813px;top:455px;width:38px;height:17px;line-height:17px;text-align:center;color:#1a1a1a;font-size:12px;font-weight:normal;white-space:nowrap;"><span class="c">让球</span></div><div class="cell" style="position:absolute;left:852px;top:455px;width:56px;height:17px;line-height:17px;text-align:center;color:#1a1a1a;font-size:12px;font-weight:normal;white-space:nowrap;"><span class="c">进球数</span></div><div style="position:absolute;left:461px;top:432px;width:57px;height:18px;border:1px solid #a9a9a9;border-radius:2px;background:#fff;box-sizing:content-box;font-size:12px;line-height:18px;color:#000;white-space:nowrap;"><span style="position:absolute;left:4px;top:1px">Crow*</span><span style="position:absolute;right:6px;top:6px;width:0;height:0;border-left:3px solid transparent;border-right:3px solid transparent;border-top:6px solid #000"></span></div><div style="position:absolute;left:528px;top:432px;width:34px;height:18px;border:1px solid #a9a9a9;border-radius:2px;background:#fff;box-sizing:content-box;font-size:12px;line-height:18px;color:#000;white-space:nowrap;"><span style="position:absolute;left:4px;top:1px"><span class="c">终</span></span><span style="position:absolute;right:6px;top:6px;width:0;height:0;border-left:3px solid transparent;border-right:3px solid transparent;border-top:6px solid #000"></span></div><div style="position:absolute;left:617px;top:432px;width:82px;height:18px;border:1px solid #a9a9a9;border-radius:2px;background:#fff;box-sizing:content-box;font-size:12px;line-height:18px;color:#000;white-space:nowrap;"><span style="position:absolute;left:4px;top:1px"><span class="c">胜平负均值</span></span><span style="position:absolute;right:6px;top:6px;width:0;height:0;border-left:3px solid transparent;border-right:3px solid transparent;border-top:6px solid #000"></span></div><div style="position:absolute;left:709px;top:432px;width:34px;height:18px;border:1px solid #a9a9a9;border-radius:2px;background:#fff;box-sizing:content-box;font-size:12px;line-height:18px;color:#000;white-space:nowrap;"><span style="position:absolute;left:4px;top:1px"><span class="c">终</span></span><span style="position:absolute;right:6px;top:6px;width:0;height:0;border-left:3px solid transparent;border-right:3px solid transparent;border-top:6px solid #000"></span></div><div style="position:absolute;left:817px;top:432px;width:46px;height:18px;border:1px solid #a9a9a9;border-radius:2px;background:#fff;box-sizing:content-box;font-size:12px;line-height:18px;color:#000;white-space:nowrap;"><span style="position:absolute;left:4px;top:1px"><span class="c">全场</span></span><span style="position:absolute;right:6px;top:6px;width:0;height:0;border-left:3px solid transparent;border-right:3px solid transparent;border-top:6px solid #000"></span></div><div style="position:absolute;left:0px;top:472px;width:908px;height:27px;background:#ffffff;"></div><div style="position:absolute;left:0px;top:472px;width:54px;height:27px;background:#013e88;"></div><div style="position:absolute;left:438px;top:472px;width:149px;height:27px;background:#fdf9f7;"></div><div style="position:absolute;left:588px;top:472px;width:186px;height:27px;background:#eff7fc;"></div><div class="cell" style="position:absolute;left:0px;top:473px;width:54px;height:27px;line-height:27px;text-align:center;color:#fff;font-size:12px;font-weight:normal;white-space:nowrap;"><span class="c">瑞典超</span></div><div class="cell" style="position:absolute;left:55px;top:473px;width:74px;height:27px;line-height:27px;text-align:center;color:#1a1a1a;font-size:12px;font-weight:normal;white-space:nowrap;"><span class="d">25-10-19</span></div><div class="cell" style="position:absolute;left:130px;top:473px;width:80px;height:27px;line-height:27px;text-align:center;color:#008000;font-size:12px;font-weight:normal;white-space:nowrap;"><span class="c">加尔斯</span></div><div class="cell" style="position:absolute;left:211px;top:473px;width:86px;height:27px;line-height:27px;text-align:center;color:#1a1a1a;font-size:12px;font-weight:normal;white-space:nowrap;"><span style="color:#ff0000"><span class="d">3-2</span></span><span class="d">(2-1)</span></div><div class="cell" style="position:absolute;left:298px;top:473px;width:38px;height:27px;line-height:27px;text-align:center;color:#1a1a1a;font-size:12px;font-weight:normal;white-space:nowrap;"><span class="d">5-8</span></div><div class="cell" style="position:absolute;left:337px;top:473px;width:100px;height:27px;line-height:27px;text-align:center;color:#1a1a1a;font-size:12px;font-weight:normal;white-space:nowrap;"><span class="c">佐加顿斯</span></div><div class="cell" style="position:absolute;left:438px;top:473px;width:40px;height:27px;line-height:27px;text-align:center;color:#1a1a1a;font-size:12px;font-weight:normal;white-space:nowrap;"><span class="d">0.82</span></div><div class="cell" style="position:absolute;left:479px;top:473px;width:66px;height:27px;line-height:27px;text-align:center;color:#1a1a1a;font-size:12px;font-weight:normal;white-space:nowrap;"><span class="c">平手</span></div><div class="cell" style="position:absolute;left:546px;top:473px;width:41px;height:27px;line-height:27px;text-align:center;color:#1a1a1a;font-size:12px;font-weight:normal;white-space:nowrap;"><span class="d">1.06</span></div><div class="cell" style="position:absolute;left:588px;top:473px;width:60px;height:27px;line-height:27px;text-align:center;color:#1a1a1a;font-size:12px;font-weight:normal;white-space:nowrap;"><span class="d">2.49</span></div><div class="cell" style="position:absolute;left:649px;top:473px;width:62px;height:27px;line-height:27px;text-align:center;color:#1a1a1a;font-size:12px;font-weight:normal;white-space:nowrap;"><span class="d">3.24</span></div><div class="cell" style="position:absolute;left:712px;top:473px;width:62px;height:27px;line-height:27px;text-align:center;color:#1a1a1a;font-size:12px;font-weight:normal;white-space:nowrap;"><span class="d">2.76</span></div><div class="cell" style="position:absolute;left:775px;top:473px;width:37px;height:27px;line-height:27px;text-align:center;color:#ff0000;font-size:12px;font-weight:normal;white-space:nowrap;"><span class="c">勝</span></div><div class="cell" style="position:absolute;left:813px;top:473px;width:38px;height:27px;line-height:27px;text-align:center;color:#ff0000;font-size:12px;font-weight:normal;white-space:nowrap;"><span class="c">贏</span></div><div class="cell" style="position:absolute;left:852px;top:473px;width:56px;height:27px;line-height:27px;text-align:center;color:#ff0000;font-size:12px;font-weight:normal;white-space:nowrap;"><span class="c">大</span></div><div style="position:absolute;left:0px;top:499px;width:908px;height:1px;background:#bcbcbc;"></div><div style="position:absolute;left:54px;top:472px;width:1px;height:27px;background:#e8e2e2;"></div><div style="position:absolute;left:129px;top:472px;width:1px;height:27px;background:#bcbcbc;"></div><div style="position:absolute;left:210px;top:472px;width:1px;height:27px;background:#bcbcbc;"></div><div style="position:absolute;left:297px;top:472px;width:1px;height:27px;background:#bcbcbc;"></div><div style="position:absolute;left:336px;top:472px;width:1px;height:27px;background:#bcbcbc;"></div><div style="position:absolute;left:437px;top:472px;width:1px;height:27px;background:#bcbcbc;"></div><div style="position:absolute;left:478px;top:472px;width:1px;height:27px;background:#bcbcbc;"></div><div style="position:absolute;left:545px;top:472px;width:1px;height:27px;background:#bcbcbc;"></div><div style="position:absolute;left:587px;top:472px;width:1px;height:27px;background:#bcbcbc;"></div><div style="position:absolute;left:648px;top:472px;width:1px;height:27px;background:#bcbcbc;"></div><div style="position:absolute;left:711px;top:472px;width:1px;height:27px;background:#bcbcbc;"></div><div style="position:absolute;left:774px;top:472px;width:1px;height:27px;background:#bcbcbc;"></div><div style="position:absolute;left:812px;top:472px;width:1px;height:27px;background:#bcbcbc;"></div><div style="position:absolute;left:851px;top:472px;width:1px;height:27px;background:#bcbcbc;"></div><div style="position:absolute;left:0px;top:500px;width:908px;height:27px;background:#efefef;"></div><div style="position:absolute;left:0px;top:500px;width:54px;height:27px;background:#013e88;"></div><div style="position:absolute;left:438px;top:500px;width:149px;height:27px;background:#fdf9f7;"></div><div style="position:absolute;left:588px;top:500px;width:186px;height:27px;background:#eff7fc;"></div><div class="cell" style="position:absolute;left:0px;top:501px;width:54px;height:27px;line-height:27px;text-align:center;color:#fff;font-size:12px;font-weight:normal;white-space:nowrap;"><span class="c">瑞典超</span></div><div class="cell" style="position:absolute;left:55px;top:501px;width:74px;height:27px;line-height:27px;text-align:center;color:#1a1a1a;font-size:12px;font-weight:normal;white-space:nowrap;"><span class="d">25-10-04</span></div><div class="cell" style="position:absolute;left:130px;top:501px;width:80px;height:27px;line-height:27px;text-align:center;color:#008000;font-size:12px;font-weight:normal;white-space:nowrap;"><span class="c">加尔斯</span></div><div class="cell" style="position:absolute;left:211px;top:501px;width:86px;height:27px;line-height:27px;text-align:center;color:#1a1a1a;font-size:12px;font-weight:normal;white-space:nowrap;"><span style="color:#ff0000"><span class="d">2-1</span></span><span class="d">(2-0)</span></div><div class="cell" style="position:absolute;left:298px;top:501px;width:38px;height:27px;line-height:27px;text-align:center;color:#1a1a1a;font-size:12px;font-weight:normal;white-space:nowrap;"><span class="d">9-4</span></div><div class="cell" style="position:absolute;left:337px;top:501px;width:100px;height:27px;line-height:27px;text-align:center;color:#1a1a1a;font-size:12px;font-weight:normal;white-space:nowrap;"><span class="c">诺科平</span></div><div class="cell" style="position:absolute;left:438px;top:501px;width:40px;height:27px;line-height:27px;text-align:center;color:#1a1a1a;font-size:12px;font-weight:normal;white-space:nowrap;"><span class="d">0.93</span></div><div class="cell" style="position:absolute;left:479px;top:501px;width:66px;height:27px;line-height:27px;text-align:center;color:#1a1a1a;font-size:12px;font-weight:normal;white-space:nowrap;"><span class="c">一</span><span class="d">/</span><span class="c">球半</span></div><div class="cell" style="position:absolute;left:546px;top:501px;width:41px;height:27px;line-height:27px;text-align:center;color:#1a1a1a;font-size:12px;font-weight:normal;white-space:nowrap;"><span class="d">0.95</span></div><div class="cell" style="position:absolute;left:588px;top:501px;width:60px;height:27px;line-height:27px;text-align:center;color:#1a1a1a;font-size:12px;font-weight:normal;white-space:nowrap;"><span class="d">1.39</span></div><div class="cell" style="position:absolute;left:649px;top:501px;width:62px;height:27px;line-height:27px;text-align:center;color:#1a1a1a;font-size:12px;font-weight:normal;white-space:nowrap;"><span class="d">4.65</span></div><div class="cell" style="position:absolute;left:712px;top:501px;width:62px;height:27px;line-height:27px;text-align:center;color:#1a1a1a;font-size:12px;font-weight:normal;white-space:nowrap;"><span class="d">7.24</span></div><div class="cell" style="position:absolute;left:775px;top:501px;width:37px;height:27px;line-height:27px;text-align:center;color:#ff0000;font-size:12px;font-weight:normal;white-space:nowrap;"><span class="c">勝</span></div><div class="cell" style="position:absolute;left:813px;top:501px;width:38px;height:27px;line-height:27px;text-align:center;color:#008000;font-size:12px;font-weight:normal;white-space:nowrap;"><span class="c">輸</span></div><div class="cell" style="position:absolute;left:852px;top:501px;width:56px;height:27px;line-height:27px;text-align:center;color:#ff0000;font-size:12px;font-weight:normal;white-space:nowrap;"><span class="c">大</span></div><div style="position:absolute;left:0px;top:527px;width:908px;height:1px;background:#bcbcbc;"></div><div style="position:absolute;left:54px;top:500px;width:1px;height:27px;background:#e8e2e2;"></div><div style="position:absolute;left:129px;top:500px;width:1px;height:27px;background:#bcbcbc;"></div><div style="position:absolute;left:210px;top:500px;width:1px;height:27px;background:#bcbcbc;"></div><div style="position:absolute;left:297px;top:500px;width:1px;height:27px;background:#bcbcbc;"></div><div style="position:absolute;left:336px;top:500px;width:1px;height:27px;background:#bcbcbc;"></div><div style="position:absolute;left:437px;top:500px;width:1px;height:27px;background:#bcbcbc;"></div><div style="position:absolute;left:478px;top:500px;width:1px;height:27px;background:#bcbcbc;"></div><div style="position:absolute;left:545px;top:500px;width:1px;height:27px;background:#bcbcbc;"></div><div style="position:absolute;left:587px;top:500px;width:1px;height:27px;background:#bcbcbc;"></div><div style="position:absolute;left:648px;top:500px;width:1px;height:27px;background:#bcbcbc;"></div><div style="position:absolute;left:711px;top:500px;width:1px;height:27px;background:#bcbcbc;"></div><div style="position:absolute;left:774px;top:500px;width:1px;height:27px;background:#bcbcbc;"></div><div style="position:absolute;left:812px;top:500px;width:1px;height:27px;background:#bcbcbc;"></div><div style="position:absolute;left:851px;top:500px;width:1px;height:27px;background:#bcbcbc;"></div><div style="position:absolute;left:0px;top:528px;width:908px;height:27px;background:#ffffff;"></div><div style="position:absolute;left:0px;top:528px;width:54px;height:27px;background:#013e88;"></div><div style="position:absolute;left:438px;top:528px;width:149px;height:27px;background:#fdf9f7;"></div><div style="position:absolute;left:588px;top:528px;width:186px;height:27px;background:#eff7fc;"></div><div class="cell" style="position:absolute;left:0px;top:529px;width:54px;height:27px;line-height:27px;text-align:center;color:#fff;font-size:12px;font-weight:normal;white-space:nowrap;"><span class="c">瑞典超</span></div><div class="cell" style="position:absolute;left:55px;top:529px;width:74px;height:27px;line-height:27px;text-align:center;color:#1a1a1a;font-size:12px;font-weight:normal;white-space:nowrap;"><span class="d">25-09-28</span></div><div class="cell" style="position:absolute;left:130px;top:529px;width:80px;height:27px;line-height:27px;text-align:center;color:#1a1a1a;font-size:12px;font-weight:normal;white-space:nowrap;">AIK<span class="c">法兰地</span></div><div class="cell" style="position:absolute;left:211px;top:529px;width:86px;height:27px;line-height:27px;text-align:center;color:#1a1a1a;font-size:12px;font-weight:normal;white-space:nowrap;"><span style="color:#ff0000"><span class="d">1-1</span></span><span class="d">(0-1)</span></div><div class="cell" style="position:absolute;left:298px;top:529px;width:38px;height:27px;line-height:27px;text-align:center;color:#1a1a1a;font-size:12px;font-weight:normal;white-space:nowrap;"><span class="d">4-3</span></div><div class="cell" style="position:absolute;left:337px;top:529px;width:100px;height:27px;line-height:27px;text-align:center;color:#008000;font-size:12px;font-weight:normal;white-space:nowrap;"><span class="c">加尔斯</span></div><div class="cell" style="position:absolute;left:438px;top:529px;width:40px;height:27px;line-height:27px;text-align:center;color:#1a1a1a;font-size:12px;font-weight:normal;white-space:nowrap;"><span class="d">0.98</span></div><div class="cell" style="position:absolute;left:479px;top:529px;width:66px;height:27px;line-height:27px;text-align:center;color:#1a1a1a;font-size:12px;font-weight:normal;white-space:nowrap;"><span class="c">平</span><span class="d">/</span><span class="c">半</span></div><div class="cell" style="position:absolute;left:546px;top:529px;width:41px;height:27px;line-height:27px;text-align:center;color:#1a1a1a;font-size:12px;font-weight:normal;white-space:nowrap;"><span class="d">0.90</span></div><div class="cell" style="position:absolute;left:588px;top:529px;width:60px;height:27px;line-height:27px;text-align:center;color:#1a1a1a;font-size:12px;font-weight:normal;white-space:nowrap;"><span class="d">2.26</span></div><div class="cell" style="position:absolute;left:649px;top:529px;width:62px;height:27px;line-height:27px;text-align:center;color:#1a1a1a;font-size:12px;font-weight:normal;white-space:nowrap;"><span class="d">3.18</span></div><div class="cell" style="position:absolute;left:712px;top:529px;width:62px;height:27px;line-height:27px;text-align:center;color:#1a1a1a;font-size:12px;font-weight:normal;white-space:nowrap;"><span class="d">3.16</span></div><div class="cell" style="position:absolute;left:775px;top:529px;width:37px;height:27px;line-height:27px;text-align:center;color:#0000ff;font-size:12px;font-weight:normal;white-space:nowrap;"><span class="c">平</span></div><div class="cell" style="position:absolute;left:813px;top:529px;width:38px;height:27px;line-height:27px;text-align:center;color:#ff0000;font-size:12px;font-weight:normal;white-space:nowrap;"><span class="c">贏</span></div><div class="cell" style="position:absolute;left:852px;top:529px;width:56px;height:27px;line-height:27px;text-align:center;color:#008000;font-size:12px;font-weight:normal;white-space:nowrap;"><span class="c">小</span></div><div style="position:absolute;left:0px;top:555px;width:908px;height:1px;background:#bcbcbc;"></div><div style="position:absolute;left:54px;top:528px;width:1px;height:27px;background:#e8e2e2;"></div><div style="position:absolute;left:129px;top:528px;width:1px;height:27px;background:#bcbcbc;"></div><div style="position:absolute;left:210px;top:528px;width:1px;height:27px;background:#bcbcbc;"></div><div style="position:absolute;left:297px;top:528px;width:1px;height:27px;background:#bcbcbc;"></div><div style="position:absolute;left:336px;top:528px;width:1px;height:27px;background:#bcbcbc;"></div><div style="position:absolute;left:437px;top:528px;width:1px;height:27px;background:#bcbcbc;"></div><div style="position:absolute;left:478px;top:528px;width:1px;height:27px;background:#bcbcbc;"></div><div style="position:absolute;left:545px;top:528px;width:1px;height:27px;background:#bcbcbc;"></div><div style="position:absolute;left:587px;top:528px;width:1px;height:27px;background:#bcbcbc;"></div><div style="position:absolute;left:648px;top:528px;width:1px;height:27px;background:#bcbcbc;"></div><div style="position:absolute;left:711px;top:528px;width:1px;height:27px;background:#bcbcbc;"></div><div style="position:absolute;left:774px;top:528px;width:1px;height:27px;background:#bcbcbc;"></div><div style="position:absolute;left:812px;top:528px;width:1px;height:27px;background:#bcbcbc;"></div><div style="position:absolute;left:851px;top:528px;width:1px;height:27px;background:#bcbcbc;"></div><div style="position:absolute;left:0px;top:556px;width:908px;height:27px;background:#efefef;"></div><div style="position:absolute;left:0px;top:556px;width:54px;height:27px;background:#013e88;"></div><div style="position:absolute;left:438px;top:556px;width:149px;height:27px;background:#fdf9f7;"></div><div style="position:absolute;left:588px;top:556px;width:186px;height:27px;background:#eff7fc;"></div><div class="cell" style="position:absolute;left:0px;top:557px;width:54px;height:27px;line-height:27px;text-align:center;color:#fff;font-size:12px;font-weight:normal;white-space:nowrap;"><span class="c">瑞典超</span></div><div class="cell" style="position:absolute;left:55px;top:557px;width:74px;height:27px;line-height:27px;text-align:center;color:#1a1a1a;font-size:12px;font-weight:normal;white-space:nowrap;"><span class="d">25-09-20</span></div><div class="cell" style="position:absolute;left:130px;top:557px;width:80px;height:27px;line-height:27px;text-align:center;color:#008000;font-size:12px;font-weight:normal;white-space:nowrap;"><span class="c">加尔斯</span></div><div class="cell" style="position:absolute;left:211px;top:557px;width:86px;height:27px;line-height:27px;text-align:center;color:#1a1a1a;font-size:12px;font-weight:normal;white-space:nowrap;"><span style="color:#ff0000"><span class="d">2-0</span></span><span class="d">(1-0)</span></div><div class="cell" style="position:absolute;left:298px;top:557px;width:38px;height:27px;line-height:27px;text-align:center;color:#1a1a1a;font-size:12px;font-weight:normal;white-space:nowrap;"><span class="d">3-4</span></div><div class="cell" style="position:absolute;left:337px;top:557px;width:100px;height:27px;line-height:27px;text-align:center;color:#1a1a1a;font-size:12px;font-weight:normal;white-space:nowrap;"><span class="c">埃尔夫斯堡</span><span style="display:inline-block;background:#f00;color:#fff;font-size:12px;line-height:15px;width:8px;text-align:center;vertical-align:0px"><span class="d">1</span></span></div><div class="cell" style="position:absolute;left:438px;top:557px;width:40px;height:27px;line-height:27px;text-align:center;color:#1a1a1a;font-size:12px;font-weight:normal;white-space:nowrap;"><span class="d">0.96</span></div><div class="cell" style="position:absolute;left:479px;top:557px;width:66px;height:27px;line-height:27px;text-align:center;color:#1a1a1a;font-size:12px;font-weight:normal;white-space:nowrap;"><span class="c">平</span><span class="d">/</span><span class="c">半</span></div><div class="cell" style="position:absolute;left:546px;top:557px;width:41px;height:27px;line-height:27px;text-align:center;color:#1a1a1a;font-size:12px;font-weight:normal;white-space:nowrap;"><span class="d">0.92</span></div><div class="cell" style="position:absolute;left:588px;top:557px;width:60px;height:27px;line-height:27px;text-align:center;color:#1a1a1a;font-size:12px;font-weight:normal;white-space:nowrap;"><span class="d">1.90</span></div><div class="cell" style="position:absolute;left:649px;top:557px;width:62px;height:27px;line-height:27px;text-align:center;color:#1a1a1a;font-size:12px;font-weight:normal;white-space:nowrap;"><span class="d">3.63</span></div><div class="cell" style="position:absolute;left:712px;top:557px;width:62px;height:27px;line-height:27px;text-align:center;color:#1a1a1a;font-size:12px;font-weight:normal;white-space:nowrap;"><span class="d">3.74</span></div><div class="cell" style="position:absolute;left:775px;top:557px;width:37px;height:27px;line-height:27px;text-align:center;color:#ff0000;font-size:12px;font-weight:normal;white-space:nowrap;"><span class="c">勝</span></div><div class="cell" style="position:absolute;left:813px;top:557px;width:38px;height:27px;line-height:27px;text-align:center;color:#ff0000;font-size:12px;font-weight:normal;white-space:nowrap;"><span class="c">贏</span></div><div class="cell" style="position:absolute;left:852px;top:557px;width:56px;height:27px;line-height:27px;text-align:center;color:#008000;font-size:12px;font-weight:normal;white-space:nowrap;"><span class="c">小</span></div><div style="position:absolute;left:0px;top:583px;width:908px;height:1px;background:#bcbcbc;"></div><div style="position:absolute;left:54px;top:556px;width:1px;height:27px;background:#e8e2e2;"></div><div style="position:absolute;left:129px;top:556px;width:1px;height:27px;background:#bcbcbc;"></div><div style="position:absolute;left:210px;top:556px;width:1px;height:27px;background:#bcbcbc;"></div><div style="position:absolute;left:297px;top:556px;width:1px;height:27px;background:#bcbcbc;"></div><div style="position:absolute;left:336px;top:556px;width:1px;height:27px;background:#bcbcbc;"></div><div style="position:absolute;left:437px;top:556px;width:1px;height:27px;background:#bcbcbc;"></div><div style="position:absolute;left:478px;top:556px;width:1px;height:27px;background:#bcbcbc;"></div><div style="position:absolute;left:545px;top:556px;width:1px;height:27px;background:#bcbcbc;"></div><div style="position:absolute;left:587px;top:556px;width:1px;height:27px;background:#bcbcbc;"></div><div style="position:absolute;left:648px;top:556px;width:1px;height:27px;background:#bcbcbc;"></div><div style="position:absolute;left:711px;top:556px;width:1px;height:27px;background:#bcbcbc;"></div><div style="position:absolute;left:774px;top:556px;width:1px;height:27px;background:#bcbcbc;"></div><div style="position:absolute;left:812px;top:556px;width:1px;height:27px;background:#bcbcbc;"></div><div style="position:absolute;left:851px;top:556px;width:1px;height:27px;background:#bcbcbc;"></div><div style="position:absolute;left:0px;top:584px;width:908px;height:27px;background:#ffffff;"></div><div style="position:absolute;left:0px;top:584px;width:54px;height:27px;background:#013e88;"></div><div style="position:absolute;left:438px;top:584px;width:149px;height:27px;background:#fdf9f7;"></div><div style="position:absolute;left:588px;top:584px;width:186px;height:27px;background:#eff7fc;"></div><div class="cell" style="position:absolute;left:0px;top:585px;width:54px;height:27px;line-height:27px;text-align:center;color:#fff;font-size:12px;font-weight:normal;white-space:nowrap;"><span class="c">瑞典超</span></div><div class="cell" style="position:absolute;left:55px;top:585px;width:74px;height:27px;line-height:27px;text-align:center;color:#1a1a1a;font-size:12px;font-weight:normal;white-space:nowrap;"><span class="d">25-09-14</span></div><div class="cell" style="position:absolute;left:130px;top:585px;width:80px;height:27px;line-height:27px;text-align:center;color:#1a1a1a;font-size:12px;font-weight:normal;white-space:nowrap;"><span class="c">天狼星</span></div><div class="cell" style="position:absolute;left:211px;top:585px;width:86px;height:27px;line-height:27px;text-align:center;color:#1a1a1a;font-size:12px;font-weight:normal;white-space:nowrap;"><span style="color:#ff0000"><span class="d">3-0</span></span><span class="d">(1-0)</span></div><div class="cell" style="position:absolute;left:298px;top:585px;width:38px;height:27px;line-height:27px;text-align:center;color:#1a1a1a;font-size:12px;font-weight:normal;white-space:nowrap;"><span class="d">7-4</span></div><div class="cell" style="position:absolute;left:337px;top:585px;width:100px;height:27px;line-height:27px;text-align:center;color:#008000;font-size:12px;font-weight:normal;white-space:nowrap;"><span class="c">加尔斯</span></div><div class="cell" style="position:absolute;left:438px;top:585px;width:40px;height:27px;line-height:27px;text-align:center;color:#1a1a1a;font-size:12px;font-weight:normal;white-space:nowrap;"><span class="d">1.09</span></div><div class="cell" style="position:absolute;left:479px;top:585px;width:66px;height:27px;line-height:27px;text-align:center;color:#1a1a1a;font-size:12px;font-weight:normal;white-space:nowrap;"><span class="c">平手</span></div><div class="cell" style="position:absolute;left:546px;top:585px;width:41px;height:27px;line-height:27px;text-align:center;color:#1a1a1a;font-size:12px;font-weight:normal;white-space:nowrap;"><span class="d">0.80</span></div><div class="cell" style="position:absolute;left:588px;top:585px;width:60px;height:27px;line-height:27px;text-align:center;color:#1a1a1a;font-size:12px;font-weight:normal;white-space:nowrap;"><span class="d">2.73</span></div><div class="cell" style="position:absolute;left:649px;top:585px;width:62px;height:27px;line-height:27px;text-align:center;color:#1a1a1a;font-size:12px;font-weight:normal;white-space:nowrap;"><span class="d">3.51</span></div><div class="cell" style="position:absolute;left:712px;top:585px;width:62px;height:27px;line-height:27px;text-align:center;color:#1a1a1a;font-size:12px;font-weight:normal;white-space:nowrap;"><span class="d">2.37</span></div><div class="cell" style="position:absolute;left:775px;top:585px;width:37px;height:27px;line-height:27px;text-align:center;color:#008000;font-size:12px;font-weight:normal;white-space:nowrap;"><span class="c">負</span></div><div class="cell" style="position:absolute;left:813px;top:585px;width:38px;height:27px;line-height:27px;text-align:center;color:#008000;font-size:12px;font-weight:normal;white-space:nowrap;"><span class="c">輸</span></div><div class="cell" style="position:absolute;left:852px;top:585px;width:56px;height:27px;line-height:27px;text-align:center;color:#0000ff;font-size:12px;font-weight:normal;white-space:nowrap;"><span class="c">走</span></div><div style="position:absolute;left:0px;top:611px;width:908px;height:1px;background:#bcbcbc;"></div><div style="position:absolute;left:54px;top:584px;width:1px;height:27px;background:#e8e2e2;"></div><div style="position:absolute;left:129px;top:584px;width:1px;height:27px;background:#bcbcbc;"></div><div style="position:absolute;left:210px;top:584px;width:1px;height:27px;background:#bcbcbc;"></div><div style="position:absolute;left:297px;top:584px;width:1px;height:27px;background:#bcbcbc;"></div><div style="position:absolute;left:336px;top:584px;width:1px;height:27px;background:#bcbcbc;"></div><div style="position:absolute;left:437px;top:584px;width:1px;height:27px;background:#bcbcbc;"></div><div style="position:absolute;left:478px;top:584px;width:1px;height:27px;background:#bcbcbc;"></div><div style="position:absolute;left:545px;top:584px;width:1px;height:27px;background:#bcbcbc;"></div><div style="position:absolute;left:587px;top:584px;width:1px;height:27px;background:#bcbcbc;"></div><div style="position:absolute;left:648px;top:584px;width:1px;height:27px;background:#bcbcbc;"></div><div style="position:absolute;left:711px;top:584px;width:1px;height:27px;background:#bcbcbc;"></div><div style="position:absolute;left:774px;top:584px;width:1px;height:27px;background:#bcbcbc;"></div><div style="position:absolute;left:812px;top:584px;width:1px;height:27px;background:#bcbcbc;"></div><div style="position:absolute;left:851px;top:584px;width:1px;height:27px;background:#bcbcbc;"></div><div style="position:absolute;left:0px;top:612px;width:908px;height:27px;background:#efefef;"></div><div style="position:absolute;left:0px;top:612px;width:54px;height:27px;background:#013e88;"></div><div style="position:absolute;left:438px;top:612px;width:149px;height:27px;background:#fdf9f7;"></div><div style="position:absolute;left:588px;top:612px;width:186px;height:27px;background:#eff7fc;"></div><div class="cell" style="position:absolute;left:0px;top:613px;width:54px;height:27px;line-height:27px;text-align:center;color:#fff;font-size:12px;font-weight:normal;white-space:nowrap;"><span class="c">瑞典超</span></div><div class="cell" style="position:absolute;left:55px;top:613px;width:74px;height:27px;line-height:27px;text-align:center;color:#1a1a1a;font-size:12px;font-weight:normal;white-space:nowrap;"><span class="d">25-08-31</span></div><div class="cell" style="position:absolute;left:130px;top:613px;width:80px;height:27px;line-height:27px;text-align:center;color:#008000;font-size:12px;font-weight:normal;white-space:nowrap;"><span class="c">加尔斯</span></div><div class="cell" style="position:absolute;left:211px;top:613px;width:86px;height:27px;line-height:27px;text-align:center;color:#1a1a1a;font-size:12px;font-weight:normal;white-space:nowrap;"><span style="color:#ff0000"><span class="d">2-1</span></span><span class="d">(1-0)</span></div><div class="cell" style="position:absolute;left:298px;top:613px;width:38px;height:27px;line-height:27px;text-align:center;color:#1a1a1a;font-size:12px;font-weight:normal;white-space:nowrap;"><span class="d">2-3</span></div><div class="cell" style="position:absolute;left:337px;top:613px;width:100px;height:27px;line-height:27px;text-align:center;color:#1a1a1a;font-size:12px;font-weight:normal;white-space:nowrap;"><span class="c">赫根</span></div><div class="cell" style="position:absolute;left:438px;top:613px;width:40px;height:27px;line-height:27px;text-align:center;color:#1a1a1a;font-size:12px;font-weight:normal;white-space:nowrap;"><span class="d">0.97</span></div><div class="cell" style="position:absolute;left:479px;top:613px;width:66px;height:27px;line-height:27px;text-align:center;color:#1a1a1a;font-size:12px;font-weight:normal;white-space:nowrap;"><span class="c">半球</span></div><div class="cell" style="position:absolute;left:546px;top:613px;width:41px;height:27px;line-height:27px;text-align:center;color:#1a1a1a;font-size:12px;font-weight:normal;white-space:nowrap;"><span class="d">0.92</span></div><div class="cell" style="position:absolute;left:588px;top:613px;width:60px;height:27px;line-height:27px;text-align:center;color:#1a1a1a;font-size:12px;font-weight:normal;white-space:nowrap;"><span class="d">1.87</span></div><div class="cell" style="position:absolute;left:649px;top:613px;width:62px;height:27px;line-height:27px;text-align:center;color:#1a1a1a;font-size:12px;font-weight:normal;white-space:nowrap;"><span class="d">3.77</span></div><div class="cell" style="position:absolute;left:712px;top:613px;width:62px;height:27px;line-height:27px;text-align:center;color:#1a1a1a;font-size:12px;font-weight:normal;white-space:nowrap;"><span class="d">3.66</span></div><div class="cell" style="position:absolute;left:775px;top:613px;width:37px;height:27px;line-height:27px;text-align:center;color:#ff0000;font-size:12px;font-weight:normal;white-space:nowrap;"><span class="c">勝</span></div><div class="cell" style="position:absolute;left:813px;top:613px;width:38px;height:27px;line-height:27px;text-align:center;color:#ff0000;font-size:12px;font-weight:normal;white-space:nowrap;"><span class="c">贏</span></div><div class="cell" style="position:absolute;left:852px;top:613px;width:56px;height:27px;line-height:27px;text-align:center;color:#ff0000;font-size:12px;font-weight:normal;white-space:nowrap;"><span class="c">大</span></div><div style="position:absolute;left:0px;top:639px;width:908px;height:1px;background:#bcbcbc;"></div><div style="position:absolute;left:54px;top:612px;width:1px;height:27px;background:#e8e2e2;"></div><div style="position:absolute;left:129px;top:612px;width:1px;height:27px;background:#bcbcbc;"></div><div style="position:absolute;left:210px;top:612px;width:1px;height:27px;background:#bcbcbc;"></div><div style="position:absolute;left:297px;top:612px;width:1px;height:27px;background:#bcbcbc;"></div><div style="position:absolute;left:336px;top:612px;width:1px;height:27px;background:#bcbcbc;"></div><div style="position:absolute;left:437px;top:612px;width:1px;height:27px;background:#bcbcbc;"></div><div style="position:absolute;left:478px;top:612px;width:1px;height:27px;background:#bcbcbc;"></div><div style="position:absolute;left:545px;top:612px;width:1px;height:27px;background:#bcbcbc;"></div><div style="position:absolute;left:587px;top:612px;width:1px;height:27px;background:#bcbcbc;"></div><div style="position:absolute;left:648px;top:612px;width:1px;height:27px;background:#bcbcbc;"></div><div style="position:absolute;left:711px;top:612px;width:1px;height:27px;background:#bcbcbc;"></div><div style="position:absolute;left:774px;top:612px;width:1px;height:27px;background:#bcbcbc;"></div><div style="position:absolute;left:812px;top:612px;width:1px;height:27px;background:#bcbcbc;"></div><div style="position:absolute;left:851px;top:612px;width:1px;height:27px;background:#bcbcbc;"></div><div style="position:absolute;left:0px;top:640px;width:908px;height:27px;background:#ffffff;"></div><div style="position:absolute;left:0px;top:640px;width:54px;height:27px;background:#013e88;"></div><div style="position:absolute;left:438px;top:640px;width:149px;height:27px;background:#fdf9f7;"></div><div style="position:absolute;left:588px;top:640px;width:186px;height:27px;background:#eff7fc;"></div><div class="cell" style="position:absolute;left:0px;top:641px;width:54px;height:27px;line-height:27px;text-align:center;color:#fff;font-size:12px;font-weight:normal;white-space:nowrap;"><span class="c">瑞典超</span></div><div class="cell" style="position:absolute;left:55px;top:641px;width:74px;height:27px;line-height:27px;text-align:center;color:#1a1a1a;font-size:12px;font-weight:normal;white-space:nowrap;"><span class="d">25-08-26</span></div><div class="cell" style="position:absolute;left:130px;top:641px;width:80px;height:27px;line-height:27px;text-align:center;color:#008000;font-size:12px;font-weight:normal;white-space:nowrap;"><span class="c">加尔斯</span></div><div class="cell" style="position:absolute;left:211px;top:641px;width:86px;height:27px;line-height:27px;text-align:center;color:#1a1a1a;font-size:12px;font-weight:normal;white-space:nowrap;"><span style="color:#ff0000"><span class="d">0-2</span></span><span class="d">(0-0)</span></div><div class="cell" style="position:absolute;left:298px;top:641px;width:38px;height:27px;line-height:27px;text-align:center;color:#1a1a1a;font-size:12px;font-weight:normal;white-space:nowrap;"><span class="d">7-7</span></div><div class="cell" style="position:absolute;left:337px;top:641px;width:100px;height:27px;line-height:27px;text-align:center;color:#1a1a1a;font-size:12px;font-weight:normal;white-space:nowrap;"><span class="c">米亚尔比</span></div><div class="cell" style="position:absolute;left:438px;top:641px;width:40px;height:27px;line-height:27px;text-align:center;color:#1a1a1a;font-size:12px;font-weight:normal;white-space:nowrap;"><span class="d">1.04</span></div><div class="cell" style="position:absolute;left:479px;top:641px;width:66px;height:27px;line-height:27px;text-align:center;color:#1a1a1a;font-size:12px;font-weight:normal;white-space:nowrap;"><span class="c">平</span><span class="d">/</span><span class="c">半</span></div><div class="cell" style="position:absolute;left:546px;top:641px;width:41px;height:27px;line-height:27px;text-align:center;color:#1a1a1a;font-size:12px;font-weight:normal;white-space:nowrap;"><span class="d">0.85</span></div><div class="cell" style="position:absolute;left:588px;top:641px;width:60px;height:27px;line-height:27px;text-align:center;color:#1a1a1a;font-size:12px;font-weight:normal;white-space:nowrap;"><span class="d">2.32</span></div><div class="cell" style="position:absolute;left:649px;top:641px;width:62px;height:27px;line-height:27px;text-align:center;color:#1a1a1a;font-size:12px;font-weight:normal;white-space:nowrap;"><span class="d">3.40</span></div><div class="cell" style="position:absolute;left:712px;top:641px;width:62px;height:27px;line-height:27px;text-align:center;color:#1a1a1a;font-size:12px;font-weight:normal;white-space:nowrap;"><span class="d">2.87</span></div><div class="cell" style="position:absolute;left:775px;top:641px;width:37px;height:27px;line-height:27px;text-align:center;color:#008000;font-size:12px;font-weight:normal;white-space:nowrap;"><span class="c">負</span></div><div class="cell" style="position:absolute;left:813px;top:641px;width:38px;height:27px;line-height:27px;text-align:center;color:#008000;font-size:12px;font-weight:normal;white-space:nowrap;"><span class="c">輸</span></div><div class="cell" style="position:absolute;left:852px;top:641px;width:56px;height:27px;line-height:27px;text-align:center;color:#008000;font-size:12px;font-weight:normal;white-space:nowrap;"><span class="c">小</span></div><div style="position:absolute;left:0px;top:667px;width:908px;height:1px;background:#bcbcbc;"></div><div style="position:absolute;left:54px;top:640px;width:1px;height:27px;background:#e8e2e2;"></div><div style="position:absolute;left:129px;top:640px;width:1px;height:27px;background:#bcbcbc;"></div><div style="position:absolute;left:210px;top:640px;width:1px;height:27px;background:#bcbcbc;"></div><div style="position:absolute;left:297px;top:640px;width:1px;height:27px;background:#bcbcbc;"></div><div style="position:absolute;left:336px;top:640px;width:1px;height:27px;background:#bcbcbc;"></div><div style="position:absolute;left:437px;top:640px;width:1px;height:27px;background:#bcbcbc;"></div><div style="position:absolute;left:478px;top:640px;width:1px;height:27px;background:#bcbcbc;"></div><div style="position:absolute;left:545px;top:640px;width:1px;height:27px;background:#bcbcbc;"></div><div style="position:absolute;left:587px;top:640px;width:1px;height:27px;background:#bcbcbc;"></div><div style="position:absolute;left:648px;top:640px;width:1px;height:27px;background:#bcbcbc;"></div><div style="position:absolute;left:711px;top:640px;width:1px;height:27px;background:#bcbcbc;"></div><div style="position:absolute;left:774px;top:640px;width:1px;height:27px;background:#bcbcbc;"></div><div style="position:absolute;left:812px;top:640px;width:1px;height:27px;background:#bcbcbc;"></div><div style="position:absolute;left:851px;top:640px;width:1px;height:27px;background:#bcbcbc;"></div><div style="position:absolute;left:0px;top:668px;width:908px;height:27px;background:#efefef;"></div><div style="position:absolute;left:0px;top:668px;width:54px;height:27px;background:#036b62;"></div><div style="position:absolute;left:438px;top:668px;width:149px;height:27px;background:#fdf9f7;"></div><div style="position:absolute;left:588px;top:668px;width:186px;height:27px;background:#eff7fc;"></div><div class="cell" style="position:absolute;left:0px;top:669px;width:54px;height:27px;line-height:27px;text-align:center;color:#fff;font-size:12px;font-weight:normal;white-space:nowrap;"><span class="c">瑞典杯</span></div><div class="cell" style="position:absolute;left:55px;top:669px;width:74px;height:27px;line-height:27px;text-align:center;color:#1a1a1a;font-size:12px;font-weight:normal;white-space:nowrap;"><span class="d">25-08-22</span></div><div class="cell" style="position:absolute;left:130px;top:669px;width:80px;height:27px;line-height:27px;text-align:center;color:#1a1a1a;font-size:12px;font-weight:normal;white-space:nowrap;">IF<span class="c">洛迪</span></div><div class="cell" style="position:absolute;left:211px;top:669px;width:86px;height:27px;line-height:27px;text-align:center;color:#1a1a1a;font-size:12px;font-weight:normal;white-space:nowrap;"><span style="color:#ff0000"><span class="d">1-3</span></span><span class="d">(0-2)</span></div><div class="cell" style="position:absolute;left:298px;top:669px;width:38px;height:27px;line-height:27px;text-align:center;color:#1a1a1a;font-size:12px;font-weight:normal;white-space:nowrap;"><span class="d">2-13</span></div><div class="cell" style="position:absolute;left:337px;top:669px;width:100px;height:27px;line-height:27px;text-align:center;color:#008000;font-size:12px;font-weight:normal;white-space:nowrap;"><span class="c">加尔斯</span></div><div class="cell" style="position:absolute;left:775px;top:669px;width:37px;height:27px;line-height:27px;text-align:center;color:#ff0000;font-size:12px;font-weight:normal;white-space:nowrap;"><span class="c">勝</span></div><div style="position:absolute;left:0px;top:695px;width:908px;height:1px;background:#bcbcbc;"></div><div style="position:absolute;left:54px;top:668px;width:1px;height:27px;background:#e8e2e2;"></div><div style="position:absolute;left:129px;top:668px;width:1px;height:27px;background:#bcbcbc;"></div><div style="position:absolute;left:210px;top:668px;width:1px;height:27px;background:#bcbcbc;"></div><div style="position:absolute;left:297px;top:668px;width:1px;height:27px;background:#bcbcbc;"></div><div style="position:absolute;left:336px;top:668px;width:1px;height:27px;background:#bcbcbc;"></div><div style="position:absolute;left:437px;top:668px;width:1px;height:27px;background:#bcbcbc;"></div><div style="position:absolute;left:478px;top:668px;width:1px;height:27px;background:#bcbcbc;"></div><div style="position:absolute;left:545px;top:668px;width:1px;height:27px;background:#bcbcbc;"></div><div style="position:absolute;left:587px;top:668px;width:1px;height:27px;background:#bcbcbc;"></div><div style="position:absolute;left:648px;top:668px;width:1px;height:27px;background:#bcbcbc;"></div><div style="position:absolute;left:711px;top:668px;width:1px;height:27px;background:#bcbcbc;"></div><div style="position:absolute;left:774px;top:668px;width:1px;height:27px;background:#bcbcbc;"></div><div style="position:absolute;left:812px;top:668px;width:1px;height:27px;background:#bcbcbc;"></div><div style="position:absolute;left:851px;top:668px;width:1px;height:27px;background:#bcbcbc;"></div><div style="position:absolute;left:0px;top:696px;width:908px;height:27px;background:#ffffff;"></div><div style="position:absolute;left:0px;top:696px;width:54px;height:27px;background:#013e88;"></div><div style="position:absolute;left:438px;top:696px;width:149px;height:27px;background:#fdf9f7;"></div><div style="position:absolute;left:588px;top:696px;width:186px;height:27px;background:#eff7fc;"></div><div class="cell" style="position:absolute;left:0px;top:697px;width:54px;height:27px;line-height:27px;text-align:center;color:#fff;font-size:12px;font-weight:normal;white-space:nowrap;"><span class="c">瑞典超</span></div><div class="cell" style="position:absolute;left:55px;top:697px;width:74px;height:27px;line-height:27px;text-align:center;color:#1a1a1a;font-size:12px;font-weight:normal;white-space:nowrap;"><span class="d">25-08-17</span></div><div class="cell" style="position:absolute;left:130px;top:697px;width:80px;height:27px;line-height:27px;text-align:center;color:#1a1a1a;font-size:12px;font-weight:normal;white-space:nowrap;"><span class="c">哈马比</span></div><div class="cell" style="position:absolute;left:211px;top:697px;width:86px;height:27px;line-height:27px;text-align:center;color:#1a1a1a;font-size:12px;font-weight:normal;white-space:nowrap;"><span style="color:#ff0000"><span class="d">1-2</span></span><span class="d">(1-1)</span></div><div class="cell" style="position:absolute;left:298px;top:697px;width:38px;height:27px;line-height:27px;text-align:center;color:#1a1a1a;font-size:12px;font-weight:normal;white-space:nowrap;"><span class="d">7-2</span></div><div class="cell" style="position:absolute;left:337px;top:697px;width:100px;height:27px;line-height:27px;text-align:center;color:#008000;font-size:12px;font-weight:normal;white-space:nowrap;"><span class="c">加尔斯</span></div><div class="cell" style="position:absolute;left:438px;top:697px;width:40px;height:27px;line-height:27px;text-align:center;color:#1a1a1a;font-size:12px;font-weight:normal;white-space:nowrap;"><span class="d">0.89</span></div><div class="cell" style="position:absolute;left:479px;top:697px;width:66px;height:27px;line-height:27px;text-align:center;color:#1a1a1a;font-size:12px;font-weight:normal;white-space:nowrap;"><span class="c">半球</span></div><div class="cell" style="position:absolute;left:546px;top:697px;width:41px;height:27px;line-height:27px;text-align:center;color:#1a1a1a;font-size:12px;font-weight:normal;white-space:nowrap;"><span class="d">1.00</span></div><div class="cell" style="position:absolute;left:588px;top:697px;width:60px;height:27px;line-height:27px;text-align:center;color:#1a1a1a;font-size:12px;font-weight:normal;white-space:nowrap;"><span class="d">1.88</span></div><div class="cell" style="position:absolute;left:649px;top:697px;width:62px;height:27px;line-height:27px;text-align:center;color:#1a1a1a;font-size:12px;font-weight:normal;white-space:nowrap;"><span class="d">3.67</span></div><div class="cell" style="position:absolute;left:712px;top:697px;width:62px;height:27px;line-height:27px;text-align:center;color:#1a1a1a;font-size:12px;font-weight:normal;white-space:nowrap;"><span class="d">3.70</span></div><div class="cell" style="position:absolute;left:775px;top:697px;width:37px;height:27px;line-height:27px;text-align:center;color:#ff0000;font-size:12px;font-weight:normal;white-space:nowrap;"><span class="c">勝</span></div><div class="cell" style="position:absolute;left:813px;top:697px;width:38px;height:27px;line-height:27px;text-align:center;color:#ff0000;font-size:12px;font-weight:normal;white-space:nowrap;"><span class="c">贏</span></div><div class="cell" style="position:absolute;left:852px;top:697px;width:56px;height:27px;line-height:27px;text-align:center;color:#ff0000;font-size:12px;font-weight:normal;white-space:nowrap;"><span class="c">大</span></div><div style="position:absolute;left:0px;top:723px;width:908px;height:1px;background:#bcbcbc;"></div><div style="position:absolute;left:54px;top:696px;width:1px;height:27px;background:#e8e2e2;"></div><div style="position:absolute;left:129px;top:696px;width:1px;height:27px;background:#bcbcbc;"></div><div style="position:absolute;left:210px;top:696px;width:1px;height:27px;background:#bcbcbc;"></div><div style="position:absolute;left:297px;top:696px;width:1px;height:27px;background:#bcbcbc;"></div><div style="position:absolute;left:336px;top:696px;width:1px;height:27px;background:#bcbcbc;"></div><div style="position:absolute;left:437px;top:696px;width:1px;height:27px;background:#bcbcbc;"></div><div style="position:absolute;left:478px;top:696px;width:1px;height:27px;background:#bcbcbc;"></div><div style="position:absolute;left:545px;top:696px;width:1px;height:27px;background:#bcbcbc;"></div><div style="position:absolute;left:587px;top:696px;width:1px;height:27px;background:#bcbcbc;"></div><div style="position:absolute;left:648px;top:696px;width:1px;height:27px;background:#bcbcbc;"></div><div style="position:absolute;left:711px;top:696px;width:1px;height:27px;background:#bcbcbc;"></div><div style="position:absolute;left:774px;top:696px;width:1px;height:27px;background:#bcbcbc;"></div><div style="position:absolute;left:812px;top:696px;width:1px;height:27px;background:#bcbcbc;"></div><div style="position:absolute;left:851px;top:696px;width:1px;height:27px;background:#bcbcbc;"></div><div style="position:absolute;left:0px;top:724px;width:908px;height:27px;background:#efefef;"></div><div style="position:absolute;left:0px;top:724px;width:54px;height:27px;background:#013e88;"></div><div style="position:absolute;left:438px;top:724px;width:149px;height:27px;background:#fdf9f7;"></div><div style="position:absolute;left:588px;top:724px;width:186px;height:27px;background:#eff7fc;"></div><div class="cell" style="position:absolute;left:0px;top:725px;width:54px;height:27px;line-height:27px;text-align:center;color:#fff;font-size:12px;font-weight:normal;white-space:nowrap;"><span class="c">瑞典超</span></div><div class="cell" style="position:absolute;left:55px;top:725px;width:74px;height:27px;line-height:27px;text-align:center;color:#1a1a1a;font-size:12px;font-weight:normal;white-space:nowrap;"><span class="d">25-08-12</span></div><div class="cell" style="position:absolute;left:130px;top:725px;width:80px;height:27px;line-height:27px;text-align:center;color:#008000;font-size:12px;font-weight:normal;white-space:nowrap;"><span class="c">加尔斯</span></div><div class="cell" style="position:absolute;left:211px;top:725px;width:86px;height:27px;line-height:27px;text-align:center;color:#1a1a1a;font-size:12px;font-weight:normal;white-space:nowrap;"><span style="color:#ff0000"><span class="d">0-1</span></span><span class="d">(0-1)</span></div><div class="cell" style="position:absolute;left:298px;top:725px;width:38px;height:27px;line-height:27px;text-align:center;color:#1a1a1a;font-size:12px;font-weight:normal;white-space:nowrap;"><span class="d">12-2</span></div><div class="cell" style="position:absolute;left:337px;top:725px;width:100px;height:27px;line-height:27px;text-align:center;color:#1a1a1a;font-size:12px;font-weight:normal;white-space:nowrap;">IFK<span class="c">哥德堡</span></div><div class="cell" style="position:absolute;left:438px;top:725px;width:40px;height:27px;line-height:27px;text-align:center;color:#1a1a1a;font-size:12px;font-weight:normal;white-space:nowrap;"><span class="d">0.89</span></div><div class="cell" style="position:absolute;left:479px;top:725px;width:66px;height:27px;line-height:27px;text-align:center;color:#1a1a1a;font-size:12px;font-weight:normal;white-space:nowrap;"><span class="c">平</span><span class="d">/</span><span class="c">半</span></div><div class="cell" style="position:absolute;left:546px;top:725px;width:41px;height:27px;line-height:27px;text-align:center;color:#1a1a1a;font-size:12px;font-weight:normal;white-space:nowrap;"><span class="d">1.00</span></div><div class="cell" style="position:absolute;left:588px;top:725px;width:60px;height:27px;line-height:27px;text-align:center;color:#1a1a1a;font-size:12px;font-weight:normal;white-space:nowrap;"><span class="d">2.07</span></div><div class="cell" style="position:absolute;left:649px;top:725px;width:62px;height:27px;line-height:27px;text-align:center;color:#1a1a1a;font-size:12px;font-weight:normal;white-space:nowrap;"><span class="d">3.43</span></div><div class="cell" style="position:absolute;left:712px;top:725px;width:62px;height:27px;line-height:27px;text-align:center;color:#1a1a1a;font-size:12px;font-weight:normal;white-space:nowrap;"><span class="d">3.32</span></div><div class="cell" style="position:absolute;left:775px;top:725px;width:37px;height:27px;line-height:27px;text-align:center;color:#008000;font-size:12px;font-weight:normal;white-space:nowrap;"><span class="c">負</span></div><div class="cell" style="position:absolute;left:813px;top:725px;width:38px;height:27px;line-height:27px;text-align:center;color:#008000;font-size:12px;font-weight:normal;white-space:nowrap;"><span class="c">輸</span></div><div class="cell" style="position:absolute;left:852px;top:725px;width:56px;height:27px;line-height:27px;text-align:center;color:#008000;font-size:12px;font-weight:normal;white-space:nowrap;"><span class="c">小</span></div><div style="position:absolute;left:0px;top:751px;width:908px;height:1px;background:#bcbcbc;"></div><div style="position:absolute;left:54px;top:724px;width:1px;height:27px;background:#e8e2e2;"></div><div style="position:absolute;left:129px;top:724px;width:1px;height:27px;background:#bcbcbc;"></div><div style="position:absolute;left:210px;top:724px;width:1px;height:27px;background:#bcbcbc;"></div><div style="position:absolute;left:297px;top:724px;width:1px;height:27px;background:#bcbcbc;"></div><div style="position:absolute;left:336px;top:724px;width:1px;height:27px;background:#bcbcbc;"></div><div style="position:absolute;left:437px;top:724px;width:1px;height:27px;background:#bcbcbc;"></div><div style="position:absolute;left:478px;top:724px;width:1px;height:27px;background:#bcbcbc;"></div><div style="position:absolute;left:545px;top:724px;width:1px;height:27px;background:#bcbcbc;"></div><div style="position:absolute;left:587px;top:724px;width:1px;height:27px;background:#bcbcbc;"></div><div style="position:absolute;left:648px;top:724px;width:1px;height:27px;background:#bcbcbc;"></div><div style="position:absolute;left:711px;top:724px;width:1px;height:27px;background:#bcbcbc;"></div><div style="position:absolute;left:774px;top:724px;width:1px;height:27px;background:#bcbcbc;"></div><div style="position:absolute;left:812px;top:724px;width:1px;height:27px;background:#bcbcbc;"></div><div style="position:absolute;left:851px;top:724px;width:1px;height:27px;background:#bcbcbc;"></div>
</body></html>
